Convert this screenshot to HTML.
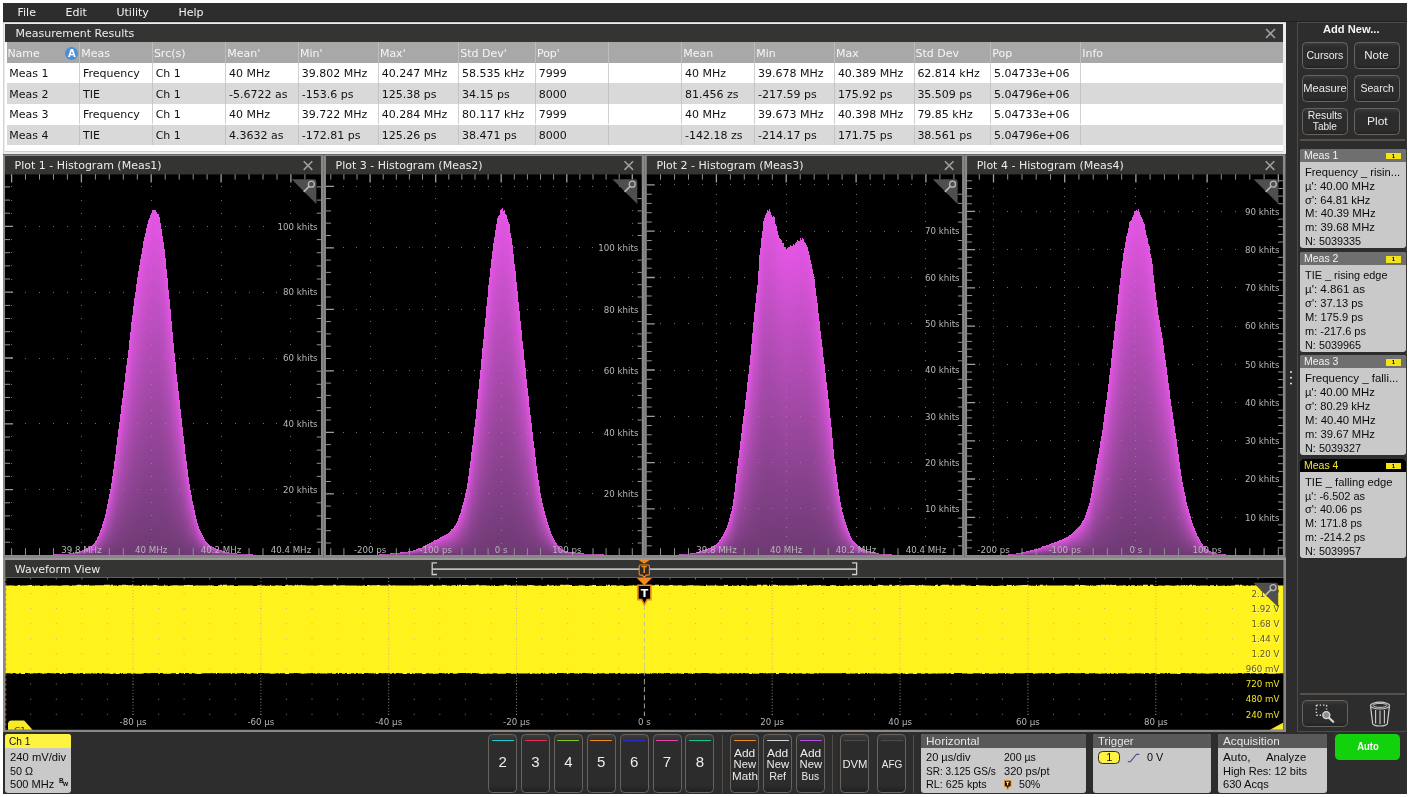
<!DOCTYPE html>
<html lang="en"><head><meta charset="utf-8"><title>Oscilloscope - Measurement Results</title>
<style>
html,body{margin:0;padding:0;background:#fff;}
body{width:1410px;height:797px;overflow:hidden;position:relative;font-family:"DejaVu Sans","Liberation Sans",sans-serif;font-size:11px;color:#111;}
#app{position:absolute;left:0;top:0;width:1410px;height:797px;background:#fff;overflow:hidden;will-change:transform;}
#app::before{content:"";position:absolute;left:3px;top:3px;width:1403.5px;height:790.5px;background:#2d2d2d;}
#app *{box-sizing:border-box;}
.abs{position:absolute;}
.menubar{position:absolute;left:3px;top:3px;width:1403.5px;height:18.8px;background:#2d2d2d;border-bottom:1px solid #1f1f1f;color:#f2f2f2;font-size:11px;line-height:19px;}
.menubar span{position:absolute;top:0;}
.panel{position:absolute;}
.respanel{left:3px;top:21.8px;width:1283px;height:132.5px;background:#ecedef;box-shadow:inset 0.7px 0.7px 0 #c6c6ca;}
.respanel .inner{position:absolute;left:2.2px;top:2.4px;width:1277.7px;height:128.2px;background:#fff;border-bottom:1px solid #cfcfcf;}
.ptitle{position:absolute;background:#343432;color:#ececec;font-size:11px;line-height:17.5px;white-space:nowrap;}
.ptitle .pt{position:absolute;left:10.4px;top:0.8px;}
.xbtn{position:absolute;}
.results{position:absolute;left:0;top:-21.8px;width:1283px;height:0;}
.tr{position:absolute;left:3.5px;width:1276.5px;background:#fff;}
.tr.alt{background:#d9d9d9;}
.tr.th{background:#a8a8a8;color:#f6f6f6;}
.td{position:absolute;top:0;height:100%;padding-top:1.6px;margin-left:-3.5px;padding-left:2.7px;border-left:1px solid #d0d0d0;white-space:nowrap;overflow:hidden;display:flex;align-items:center;font-size:11px;}
.tr .td:first-child{border-left:none;}
.tr.alt .td{border-left-color:#c4c4c4;}
.tr.th .td{border-left-color:#bdbdbd;padding-left:0.9px;}
.abadge{position:absolute;right:1px;top:4.8px;width:13px;height:13px;border-radius:50%;background:#4a8fd6;color:#fff;font-weight:bold;font-size:10px;line-height:13px;text-align:center;}
.fx{display:inline-block;white-space:nowrap;}
svg{display:block;}
svg text{font-family:"DejaVu Sans","Liberation Sans",sans-serif;}
.layer{position:absolute;left:0;top:0;}
/* sidebar */
.sidebar{position:absolute;left:1296.5px;top:22px;width:110px;height:709.5px;border:1px solid #504b47;border-right-color:#3a3836;background:#2d2d2d;font-family:"Liberation Sans","DejaVu Sans",sans-serif;}
.sidebar h2{position:absolute;left:0;top:0.2px;width:108px;margin:0;text-align:center;font-size:11.5px;line-height:13px;color:#f4f4f4;font-weight:bold;}
.sbtn{position:absolute;width:46px;height:26.5px;border:1px solid #6a625c;border-radius:4.5px;background:linear-gradient(#3a3a3a 0,#2c2c2c 18%,#2c2c2c 85%,#222 100%);color:#ececec;font-size:10.8px;line-height:11px;display:flex;align-items:center;justify-content:center;text-align:center;white-space:nowrap;}
.sep{position:absolute;height:1.5px;background:#57514c;}
.badge{position:absolute;left:2px;width:106px;height:99.5px;border-radius:3px;background:#c9c9c9;overflow:hidden;color:#0c0c0c;font-size:10.6px;}
.badge header{position:absolute;left:0;top:0;width:100%;height:13px;background:#6f6f6f;color:#f4f4f4;font-size:10.9px;line-height:13px;padding-left:4.5px;}
.badge.sel header{background:#000;color:#f3ea2a;}
.badge header i{position:absolute;right:4.5px;top:4px;width:15px;height:6.5px;background:#f1e41f;color:#000;font-style:normal;font-size:6px;line-height:6.5px;text-align:center;font-weight:bold;}
.badge p{position:absolute;left:5px;margin:0;line-height:13px;white-space:nowrap;}
/* bottom bar */
.bottom{position:absolute;left:3px;top:732px;width:1403.5px;height:61.5px;background:#2d2d2d;font-family:"Liberation Sans","DejaVu Sans",sans-serif;}
.chb{position:absolute;top:2px;width:29px;height:58.5px;border:1px solid #6a625c;border-radius:4.5px;background:linear-gradient(#3b3b3b 0,#2c2c2c 14%,#2c2c2c 88%,#202020 100%);color:#ececec;text-align:center;}
.chb::before{content:"";position:absolute;left:2.5px;right:2.5px;top:5.2px;height:1.2px;background:var(--c);border-radius:1px;}
.chb b{position:absolute;left:0;width:100%;top:17px;font-weight:normal;font-size:15px;line-height:20px;}
.chb em{position:absolute;left:-3px;right:-3px;top:12.5px;font-style:normal;font-size:10.8px;line-height:11.6px;}
.chb em.one{top:23.5px;}
.vsep{position:absolute;top:2.5px;width:1px;height:58px;background:#544e4a;}
.info{position:absolute;top:2px;height:58.5px;border-radius:3px;background:#c9c9c9;overflow:hidden;color:#0c0c0c;font-size:10.6px;}
.info header{position:absolute;left:0;top:0;width:100%;height:14px;background:#595959;color:#e6e6e6;font-size:10.9px;line-height:14px;padding-left:5px;}
.info.ch header{background:#fff341;color:#111;padding-left:3.8px;}
.info p{position:absolute;margin:0;line-height:13px;white-space:nowrap;}
.autobtn{position:absolute;left:1332.3px;top:2.4px;width:65px;height:25.6px;border-radius:4.5px;background:#12d20b;color:#fff;font-weight:bold;font-size:10.5px;line-height:24px;text-align:center;}
</style></head><body>
<div id="app">
<nav class="menubar"><span style="left:14.5px">File</span><span style="left:62.5px">Edit</span><span style="left:113.5px">Utility</span><span style="left:175.5px">Help</span></nav>
<section class="panel respanel">
<div class="inner"></div><header class="ptitle" style="left:2.2px;top:2.4px;width:1277.7px;height:17.5px"><span class="pt">Measurement Results</span><svg class="xbtn" style="left:1259.4px;top:3.8px" width="11" height="11" viewBox="0 0 11 11"><path d="M1 1L10 10M10 1L1 10" stroke="#9e9e9e" stroke-width="1.6" fill="none"/></svg></header>
<div class="results" role="table">
<div class="tr th" style="top:42px;height:20.5px">
<div class="td" style="left:3.5px;width:72.8px">Name<span class="abadge">A</span></div>
<div class="td" style="left:76.3px;width:72.7px">Meas</div>
<div class="td" style="left:149.0px;width:73.3px">Src(s)</div>
<div class="td" style="left:222.3px;width:72.7px">Mean'</div>
<div class="td" style="left:295.0px;width:80.0px">Min'</div>
<div class="td" style="left:375.0px;width:80.3px">Max'</div>
<div class="td" style="left:455.3px;width:76.7px">Std Dev'</div>
<div class="td" style="left:532.0px;width:73.3px">Pop'</div>
<div class="td" style="left:605.3px;width:73.0px"></div>
<div class="td" style="left:678.3px;width:73.0px">Mean</div>
<div class="td" style="left:751.3px;width:79.9px">Min</div>
<div class="td" style="left:831.2px;width:79.5px">Max</div>
<div class="td" style="left:910.7px;width:76.6px">Std Dev</div>
<div class="td" style="left:987.3px;width:90.0px">Pop</div>
<div class="td" style="left:1077.3px;width:202.7px">Info</div>
</div>
<div class="tr" style="top:62.5px;height:20.8px">
<div class="td" style="left:3.5px;width:72.8px">Meas 1</div>
<div class="td" style="left:76.3px;width:72.7px">Frequency</div>
<div class="td" style="left:149.0px;width:73.3px">Ch 1</div>
<div class="td" style="left:222.3px;width:72.7px">40 MHz</div>
<div class="td" style="left:295.0px;width:80.0px">39.802 MHz</div>
<div class="td" style="left:375.0px;width:80.3px">40.247 MHz</div>
<div class="td" style="left:455.3px;width:76.7px">58.535 kHz</div>
<div class="td" style="left:532.0px;width:73.3px">7999</div>
<div class="td" style="left:605.3px;width:73.0px"></div>
<div class="td" style="left:678.3px;width:73.0px">40 MHz</div>
<div class="td" style="left:751.3px;width:79.9px">39.678 MHz</div>
<div class="td" style="left:831.2px;width:79.5px">40.389 MHz</div>
<div class="td" style="left:910.7px;width:76.6px">62.814 kHz</div>
<div class="td" style="left:987.3px;width:90.0px">5.04733e+06</div>
<div class="td" style="left:1077.3px;width:202.7px"></div>
</div>
<div class="tr alt" style="top:83.3px;height:20.6px">
<div class="td" style="left:3.5px;width:72.8px">Meas 2</div>
<div class="td" style="left:76.3px;width:72.7px">TIE</div>
<div class="td" style="left:149.0px;width:73.3px">Ch 1</div>
<div class="td" style="left:222.3px;width:72.7px">-5.6722 as</div>
<div class="td" style="left:295.0px;width:80.0px">-153.6 ps</div>
<div class="td" style="left:375.0px;width:80.3px">125.38 ps</div>
<div class="td" style="left:455.3px;width:76.7px">34.15 ps</div>
<div class="td" style="left:532.0px;width:73.3px">8000</div>
<div class="td" style="left:605.3px;width:73.0px"></div>
<div class="td" style="left:678.3px;width:73.0px">81.456 zs</div>
<div class="td" style="left:751.3px;width:79.9px">-217.59 ps</div>
<div class="td" style="left:831.2px;width:79.5px">175.92 ps</div>
<div class="td" style="left:910.7px;width:76.6px">35.509 ps</div>
<div class="td" style="left:987.3px;width:90.0px">5.04796e+06</div>
<div class="td" style="left:1077.3px;width:202.7px"></div>
</div>
<div class="tr" style="top:103.9px;height:20.6px">
<div class="td" style="left:3.5px;width:72.8px">Meas 3</div>
<div class="td" style="left:76.3px;width:72.7px">Frequency</div>
<div class="td" style="left:149.0px;width:73.3px">Ch 1</div>
<div class="td" style="left:222.3px;width:72.7px">40 MHz</div>
<div class="td" style="left:295.0px;width:80.0px">39.722 MHz</div>
<div class="td" style="left:375.0px;width:80.3px">40.284 MHz</div>
<div class="td" style="left:455.3px;width:76.7px">80.117 kHz</div>
<div class="td" style="left:532.0px;width:73.3px">7999</div>
<div class="td" style="left:605.3px;width:73.0px"></div>
<div class="td" style="left:678.3px;width:73.0px">40 MHz</div>
<div class="td" style="left:751.3px;width:79.9px">39.673 MHz</div>
<div class="td" style="left:831.2px;width:79.5px">40.398 MHz</div>
<div class="td" style="left:910.7px;width:76.6px">79.85 kHz</div>
<div class="td" style="left:987.3px;width:90.0px">5.04733e+06</div>
<div class="td" style="left:1077.3px;width:202.7px"></div>
</div>
<div class="tr alt" style="top:124.5px;height:20.5px">
<div class="td" style="left:3.5px;width:72.8px">Meas 4</div>
<div class="td" style="left:76.3px;width:72.7px">TIE</div>
<div class="td" style="left:149.0px;width:73.3px">Ch 1</div>
<div class="td" style="left:222.3px;width:72.7px">4.3632 as</div>
<div class="td" style="left:295.0px;width:80.0px">-172.81 ps</div>
<div class="td" style="left:375.0px;width:80.3px">125.26 ps</div>
<div class="td" style="left:455.3px;width:76.7px">38.471 ps</div>
<div class="td" style="left:532.0px;width:73.3px">8000</div>
<div class="td" style="left:605.3px;width:73.0px"></div>
<div class="td" style="left:678.3px;width:73.0px">-142.18 zs</div>
<div class="td" style="left:751.3px;width:79.9px">-214.17 ps</div>
<div class="td" style="left:831.2px;width:79.5px">171.75 ps</div>
<div class="td" style="left:910.7px;width:76.6px">38.561 ps</div>
<div class="td" style="left:987.3px;width:90.0px">5.04796e+06</div>
<div class="td" style="left:1077.3px;width:202.7px"></div>
</div>
</div>
</section>
<svg class="layer plots" width="1410" height="797" viewBox="0 0 1410 797">
<defs><g id="zoomico"><path d="M0 0H22.4Q24.8 0 24.8 2.4V24.6Z" fill="#4f4f4f"/><circle cx="19.7" cy="4.9" r="3.0" fill="none" stroke="#b9b9b9" stroke-width="1.3"/><path d="M17.4 7.2L12.6 12" stroke="#b9b9b9" stroke-width="1.7" stroke-linecap="round"/></g><linearGradient id="hg" x1="0" y1="0" x2="0" y2="1"><stop offset="0" stop-color="#ec58ec" stop-opacity=".97"/><stop offset="1" stop-color="#c468ce" stop-opacity=".56"/></linearGradient><path id="xico" d="M0.4 0.4L9 9M9 0.4L0.4 9" stroke="#9e9e9e" stroke-width="1.6" fill="none"/></defs>
<g id="plot1">
<rect x="3" y="154.3" width="320.45" height="403.2" fill="#8b8987"/>
<rect x="5.0" y="156.0" width="315.95" height="18.19999999999999" fill="#343432"/>
<rect x="5.0" y="174.2" width="315.95" height="380.8" fill="#000"/>
<text x="14.6" y="169" font-size="11" fill="#ececec">Plot 1 - Histogram (Meas1)</text>
<use href="#xico" x="303.3" y="160.9"/>
<path d="M11 489.5h1M25 489.5h1M39 489.5h1M53 489.5h1M67 489.5h1M81 489.5h1M95 489.5h1M109 489.5h1M123 489.5h1M137 489.5h1M151 489.5h1M165 489.5h1M179 489.5h1M193 489.5h1M207 489.5h1M221 489.5h1M235 489.5h1M249 489.5h1M263 489.5h1M276 489.5h1M11 423.5h1M25 423.5h1M39 423.5h1M53 423.5h1M67 423.5h1M81 423.5h1M95 423.5h1M109 423.5h1M123 423.5h1M137 423.5h1M151 423.5h1M165 423.5h1M179 423.5h1M193 423.5h1M207 423.5h1M221 423.5h1M235 423.5h1M249 423.5h1M263 423.5h1M276 423.5h1M11 358.5h1M25 358.5h1M39 358.5h1M53 358.5h1M67 358.5h1M81 358.5h1M95 358.5h1M109 358.5h1M123 358.5h1M137 358.5h1M151 358.5h1M165 358.5h1M179 358.5h1M193 358.5h1M207 358.5h1M221 358.5h1M235 358.5h1M249 358.5h1M263 358.5h1M276 358.5h1M11 292.5h1M25 292.5h1M39 292.5h1M53 292.5h1M67 292.5h1M81 292.5h1M95 292.5h1M109 292.5h1M123 292.5h1M137 292.5h1M151 292.5h1M165 292.5h1M179 292.5h1M193 292.5h1M207 292.5h1M221 292.5h1M235 292.5h1M249 292.5h1M263 292.5h1M276 292.5h1M11 226.5h1M25 226.5h1M39 226.5h1M53 226.5h1M67 226.5h1M81 226.5h1M95 226.5h1M109 226.5h1M123 226.5h1M137 226.5h1M151 226.5h1M165 226.5h1M179 226.5h1M193 226.5h1M207 226.5h1M221 226.5h1M235 226.5h1M249 226.5h1M263 226.5h1M11 542.5h1M11 529.5h1M11 515.5h1M11 502.5h1M11 476.5h1M11 463.5h1M11 450.5h1M11 436.5h1M11 410.5h1M11 397.5h1M11 384.5h1M11 371.5h1M11 344.5h1M11 331.5h1M11 318.5h1M11 305.5h1M11 279.5h1M11 265.5h1M11 252.5h1M11 239.5h1M11 213.5h1M11 200.5h1M11 186.5h1M81 542.5h1M81 529.5h1M81 515.5h1M81 502.5h1M81 476.5h1M81 463.5h1M81 450.5h1M81 436.5h1M81 410.5h1M81 397.5h1M81 384.5h1M81 371.5h1M81 344.5h1M81 331.5h1M81 318.5h1M81 305.5h1M81 279.5h1M81 265.5h1M81 252.5h1M81 239.5h1M81 213.5h1M81 200.5h1M81 186.5h1M151 542.5h1M151 529.5h1M151 515.5h1M151 502.5h1M151 476.5h1M151 463.5h1M151 450.5h1M151 436.5h1M151 410.5h1M151 397.5h1M151 384.5h1M151 371.5h1M151 344.5h1M151 331.5h1M151 318.5h1M151 305.5h1M151 279.5h1M151 265.5h1M151 252.5h1M151 239.5h1M151 213.5h1M151 200.5h1M151 186.5h1M221 542.5h1M221 529.5h1M221 515.5h1M221 502.5h1M221 476.5h1M221 463.5h1M221 450.5h1M221 436.5h1M221 410.5h1M221 397.5h1M221 384.5h1M221 371.5h1M221 344.5h1M221 331.5h1M221 318.5h1M221 305.5h1M221 279.5h1M221 265.5h1M221 252.5h1M221 239.5h1M221 213.5h1M221 200.5h1M221 186.5h1M290 542.5h1M290 529.5h1M290 515.5h1M290 502.5h1M290 476.5h1M290 463.5h1M290 450.5h1M290 436.5h1M290 410.5h1M290 397.5h1M290 384.5h1M290 371.5h1M290 344.5h1M290 331.5h1M290 318.5h1M290 305.5h1M290 279.5h1M290 265.5h1M290 252.5h1M290 239.5h1M290 213.5h1M290 200.5h1M290 186.5h1" stroke="#707070" stroke-width="1" fill="none"/>
<g fill="url(#hg)" shape-rendering="crispEdges"><rect x="50" y="554.6" width="1" height="0.4"/><rect x="51" y="554.6" width="1" height="0.4"/><rect x="52" y="554.5" width="1" height="0.5"/><rect x="53" y="554.4" width="1" height="0.6"/><rect x="54" y="554.4" width="1" height="0.6"/><rect x="55" y="554.3" width="1" height="0.7"/><rect x="56" y="554.3" width="1" height="0.7"/><rect x="57" y="554.2" width="1" height="0.8"/><rect x="58" y="554.2" width="1" height="0.8"/><rect x="59" y="554.1" width="1" height="0.9"/><rect x="60" y="554" width="1" height="1"/><rect x="61" y="554" width="1" height="1"/><rect x="62" y="553.9" width="1" height="1.1"/><rect x="63" y="553.9" width="1" height="1.1"/><rect x="64" y="553.8" width="1" height="1.2"/><rect x="65" y="553.7" width="1" height="1.3"/><rect x="66" y="553.6" width="1" height="1.4"/><rect x="67" y="553.6" width="1" height="1.4"/><rect x="68" y="553.5" width="1" height="1.5"/><rect x="69" y="553.4" width="1" height="1.6"/><rect x="70" y="553.2" width="1" height="1.8"/><rect x="71" y="553.1" width="1" height="1.9"/><rect x="72" y="553" width="1" height="2"/><rect x="73" y="552.8" width="1" height="2.2"/><rect x="74" y="552.6" width="1" height="2.4"/><rect x="75" y="552.4" width="1" height="2.6"/><rect x="76" y="552.2" width="1" height="2.8"/><rect x="77" y="551.9" width="1" height="3.1"/><rect x="78" y="551.6" width="1" height="3.4"/><rect x="79" y="551.3" width="1" height="3.7"/><rect x="80" y="551" width="1" height="4"/><rect x="81" y="550.6" width="1" height="4.4"/><rect x="82" y="550.3" width="1" height="4.7"/><rect x="83" y="549.9" width="1" height="5.1"/><rect x="84" y="549.4" width="1" height="5.6"/><rect x="85" y="549.2" width="1" height="5.8"/><rect x="86" y="548.3" width="1" height="6.7"/><rect x="87" y="547.8" width="1" height="7.2"/><rect x="88" y="547.6" width="1" height="7.4"/><rect x="89" y="546.9" width="1" height="8.1"/><rect x="90" y="546.3" width="1" height="8.7"/><rect x="91" y="545.5" width="1" height="9.5"/><rect x="92" y="544.8" width="1" height="10.2"/><rect x="93" y="544.3" width="1" height="10.7"/><rect x="94" y="543.1" width="1" height="11.9"/><rect x="95" y="541.1" width="1" height="13.9"/><rect x="96" y="539.5" width="1" height="15.5"/><rect x="97" y="537.3" width="1" height="17.7"/><rect x="98" y="535.6" width="1" height="19.4"/><rect x="99" y="533" width="1" height="22"/><rect x="100" y="530.3" width="1" height="24.7"/><rect x="101" y="528" width="1" height="27"/><rect x="102" y="524.4" width="1" height="30.6"/><rect x="103" y="521" width="1" height="34"/><rect x="104" y="517.8" width="1" height="37.2"/><rect x="105" y="513.6" width="1" height="41.4"/><rect x="106" y="508.7" width="1" height="46.3"/><rect x="107" y="503.6" width="1" height="51.4"/><rect x="108" y="499.1" width="1" height="55.9"/><rect x="109" y="494.1" width="1" height="60.9"/><rect x="110" y="488.5" width="1" height="66.5"/><rect x="111" y="483.1" width="1" height="71.9"/><rect x="112" y="476.2" width="1" height="78.8"/><rect x="113" y="468.8" width="1" height="86.2"/><rect x="114" y="461.1" width="1" height="93.9"/><rect x="115" y="453.5" width="1" height="101.5"/><rect x="116" y="445.4" width="1" height="109.6"/><rect x="117" y="437.4" width="1" height="117.6"/><rect x="118" y="429" width="1" height="126"/><rect x="119" y="421.5" width="1" height="133.5"/><rect x="120" y="414.2" width="1" height="140.8"/><rect x="121" y="405" width="1" height="150"/><rect x="122" y="397.6" width="1" height="157.4"/><rect x="123" y="389.5" width="1" height="165.5"/><rect x="124" y="382.4" width="1" height="172.6"/><rect x="125" y="372.8" width="1" height="182.2"/><rect x="126" y="364.9" width="1" height="190.1"/><rect x="127" y="358.3" width="1" height="196.7"/><rect x="128" y="349.6" width="1" height="205.4"/><rect x="129" y="340.2" width="1" height="214.8"/><rect x="130" y="331.5" width="1" height="223.5"/><rect x="131" y="322.3" width="1" height="232.7"/><rect x="132" y="315.1" width="1" height="239.9"/><rect x="133" y="305.8" width="1" height="249.2"/><rect x="134" y="298.3" width="1" height="256.7"/><rect x="135" y="291.8" width="1" height="263.2"/><rect x="136" y="284.3" width="1" height="270.7"/><rect x="137" y="277" width="1" height="278"/><rect x="138" y="270.5" width="1" height="284.5"/><rect x="139" y="264.9" width="1" height="290.1"/><rect x="140" y="258.6" width="1" height="296.4"/><rect x="141" y="254.3" width="1" height="300.7"/><rect x="142" y="248.1" width="1" height="306.9"/><rect x="143" y="241.1" width="1" height="313.9"/><rect x="144" y="237.3" width="1" height="317.7"/><rect x="145" y="233.3" width="1" height="321.7"/><rect x="146" y="227.8" width="1" height="327.2"/><rect x="147" y="223.5" width="1" height="331.5"/><rect x="148" y="219.9" width="1" height="335.1"/><rect x="149" y="217.6" width="1" height="337.4"/><rect x="150" y="214.9" width="1" height="340.1"/><rect x="151" y="212.8" width="1" height="342.2"/><rect x="152" y="210.2" width="1" height="344.8"/><rect x="153" y="209.8" width="1" height="345.2"/><rect x="154" y="209.7" width="1" height="345.3"/><rect x="155" y="209.7" width="1" height="345.3"/><rect x="156" y="212.4" width="1" height="342.6"/><rect x="157" y="214.1" width="1" height="340.9"/><rect x="158" y="214.1" width="1" height="340.9"/><rect x="159" y="216.8" width="1" height="338.2"/><rect x="160" y="223.1" width="1" height="331.9"/><rect x="161" y="229.1" width="1" height="325.9"/><rect x="162" y="236.1" width="1" height="318.9"/><rect x="163" y="242.2" width="1" height="312.8"/><rect x="164" y="248.9" width="1" height="306.1"/><rect x="165" y="258.3" width="1" height="296.7"/><rect x="166" y="268.6" width="1" height="286.4"/><rect x="167" y="278" width="1" height="277"/><rect x="168" y="289.7" width="1" height="265.3"/><rect x="169" y="299.2" width="1" height="255.8"/><rect x="170" y="308.8" width="1" height="246.2"/><rect x="171" y="320.6" width="1" height="234.4"/><rect x="172" y="331.8" width="1" height="223.2"/><rect x="173" y="343" width="1" height="212"/><rect x="174" y="352.9" width="1" height="202.1"/><rect x="175" y="362" width="1" height="193"/><rect x="176" y="373.6" width="1" height="181.4"/><rect x="177" y="381.7" width="1" height="173.3"/><rect x="178" y="391" width="1" height="164"/><rect x="179" y="400" width="1" height="155"/><rect x="180" y="409.2" width="1" height="145.8"/><rect x="181" y="417.9" width="1" height="137.1"/><rect x="182" y="426.9" width="1" height="128.1"/><rect x="183" y="435.5" width="1" height="119.5"/><rect x="184" y="444.4" width="1" height="110.6"/><rect x="185" y="453.6" width="1" height="101.4"/><rect x="186" y="460.9" width="1" height="94.1"/><rect x="187" y="469.3" width="1" height="85.7"/><rect x="188" y="477.2" width="1" height="77.8"/><rect x="189" y="483.6" width="1" height="71.4"/><rect x="190" y="489.6" width="1" height="65.4"/><rect x="191" y="495.2" width="1" height="59.8"/><rect x="192" y="500.5" width="1" height="54.5"/><rect x="193" y="505.4" width="1" height="49.6"/><rect x="194" y="510.2" width="1" height="44.8"/><rect x="195" y="514.7" width="1" height="40.3"/><rect x="196" y="519" width="1" height="36"/><rect x="197" y="523" width="1" height="32"/><rect x="198" y="526.2" width="1" height="28.8"/><rect x="199" y="529" width="1" height="26"/><rect x="200" y="531.1" width="1" height="23.9"/><rect x="201" y="533" width="1" height="22"/><rect x="202" y="535.1" width="1" height="19.9"/><rect x="203" y="537" width="1" height="18"/><rect x="204" y="538.8" width="1" height="16.2"/><rect x="205" y="540.7" width="1" height="14.3"/><rect x="206" y="541.7" width="1" height="13.3"/><rect x="207" y="543" width="1" height="12"/><rect x="208" y="544.4" width="1" height="10.6"/><rect x="209" y="545.2" width="1" height="9.8"/><rect x="210" y="545.8" width="1" height="9.2"/><rect x="211" y="545.9" width="1" height="9.1"/><rect x="212" y="546.7" width="1" height="8.3"/><rect x="213" y="547.3" width="1" height="7.7"/><rect x="214" y="547.5" width="1" height="7.5"/><rect x="215" y="548.2" width="1" height="6.8"/><rect x="216" y="548.8" width="1" height="6.2"/><rect x="217" y="549.1" width="1" height="5.9"/><rect x="218" y="549.3" width="1" height="5.7"/><rect x="219" y="549.7" width="1" height="5.3"/><rect x="220" y="550.1" width="1" height="4.9"/><rect x="221" y="550.4" width="1" height="4.6"/><rect x="222" y="550.8" width="1" height="4.2"/><rect x="223" y="551.1" width="1" height="3.9"/><rect x="224" y="551.4" width="1" height="3.6"/><rect x="225" y="551.6" width="1" height="3.4"/><rect x="226" y="551.9" width="1" height="3.1"/><rect x="227" y="552.1" width="1" height="2.9"/><rect x="228" y="552.3" width="1" height="2.7"/><rect x="229" y="552.5" width="1" height="2.5"/><rect x="230" y="552.7" width="1" height="2.3"/><rect x="231" y="552.8" width="1" height="2.2"/><rect x="232" y="553" width="1" height="2"/><rect x="233" y="553.1" width="1" height="1.9"/><rect x="234" y="553.2" width="1" height="1.8"/><rect x="235" y="553.4" width="1" height="1.6"/><rect x="236" y="553.4" width="1" height="1.6"/><rect x="237" y="553.5" width="1" height="1.5"/><rect x="238" y="553.6" width="1" height="1.4"/><rect x="239" y="553.7" width="1" height="1.3"/><rect x="240" y="553.8" width="1" height="1.2"/><rect x="241" y="553.8" width="1" height="1.2"/><rect x="242" y="553.9" width="1" height="1.1"/><rect x="243" y="554" width="1" height="1"/><rect x="244" y="554" width="1" height="1"/><rect x="245" y="554.1" width="1" height="0.9"/><rect x="246" y="554.1" width="1" height="0.9"/><rect x="247" y="554.2" width="1" height="0.8"/><rect x="248" y="554.2" width="1" height="0.8"/><rect x="249" y="554.3" width="1" height="0.7"/><rect x="250" y="554.3" width="1" height="0.7"/><rect x="251" y="554.4" width="1" height="0.6"/><rect x="252" y="554.4" width="1" height="0.6"/><rect x="253" y="554.5" width="1" height="0.5"/><rect x="254" y="554.5" width="1" height="0.5"/><rect x="255" y="554.6" width="1" height="0.4"/><rect x="256" y="554.6" width="1" height="0.4"/><rect x="257" y="554.6" width="1" height="0.4"/></g>
<path d="M11.6 555.0v-6.8M25.5 174.2v5.4M25.5 555.0v-6.8M39.5 174.2v5.4M39.5 555.0v-6.8M53.5 174.2v5.4M53.5 555.0v-6.8M67.4 174.2v5.4M95.4 174.2v5.4M109.3 174.2v5.4M109.3 555.0v-6.8M123.3 174.2v5.4M123.3 555.0v-6.8M137.3 174.2v5.4M165.2 174.2v5.4M179.2 174.2v5.4M179.2 555.0v-6.8M193.2 174.2v5.4M193.2 555.0v-6.8M207.1 174.2v5.4M235.1 174.2v5.4M249.0 174.2v5.4M249.0 555.0v-6.8M263.0 174.2v5.4M263.0 555.0v-6.8M277.0 174.2v5.4M304.9 174.2v5.4M318.9 555.0v-6.8M5.0 542.2h5.0M320.95 542.2h-4.2M5.0 529.1h5.0M320.95 529.1h-4.2M5.0 515.9h5.0M320.95 515.9h-4.2M5.0 502.8h5.0M320.95 502.8h-4.2M5.0 476.4h5.0M320.95 476.4h-4.2M5.0 463.3h5.0M320.95 463.3h-4.2M5.0 450.1h5.0M320.95 450.1h-4.2M5.0 437.0h5.0M320.95 437.0h-4.2M5.0 410.6h5.0M320.95 410.6h-4.2M5.0 397.5h5.0M320.95 397.5h-4.2M5.0 384.3h5.0M320.95 384.3h-4.2M5.0 371.2h5.0M320.95 371.2h-4.2M5.0 344.8h5.0M320.95 344.8h-4.2M5.0 331.7h5.0M320.95 331.7h-4.2M5.0 318.5h5.0M320.95 318.5h-4.2M5.0 305.4h5.0M320.95 305.4h-4.2M5.0 279.0h5.0M320.95 279.0h-4.2M5.0 265.9h5.0M320.95 265.9h-4.2M5.0 252.7h5.0M320.95 252.7h-4.2M5.0 239.6h5.0M320.95 239.6h-4.2M5.0 213.2h5.0M320.95 213.2h-4.2M5.0 200.1h5.0M320.95 200.1h-4.2M5.0 186.9h5.0M320.95 186.9h-4.2" stroke="#929292" stroke-width="1" fill="none"/>
<path d="M11.6 174.2v8.3M81.4 174.2v8.3M151.2 174.2v8.3M221.1 174.2v8.3M290.9 174.2v8.3M5.0 489.6h8.0M5.0 423.8h8.0M5.0 358.0h8.0M5.0 292.2h8.0M5.0 226.4h8.0" stroke="#9e9e9e" stroke-width="1.3" fill="none"/>
<g font-size="8.67" fill="#b6b6b6">
<text x="317.6" y="492.8" text-anchor="end">20 khits</text>
<text x="317.6" y="427.0" text-anchor="end">40 khits</text>
<text x="317.6" y="361.2" text-anchor="end">60 khits</text>
<text x="317.6" y="295.4" text-anchor="end">80 khits</text>
<text x="317.6" y="229.6" text-anchor="end">100 khits</text>
<text x="81.4" y="552.6" text-anchor="middle">39.8 MHz</text>
<text x="151.2" y="552.6" text-anchor="middle">40 MHz</text>
<text x="221.1" y="552.6" text-anchor="middle">40.2 MHz</text>
<text x="290.9" y="552.6" text-anchor="middle">40.4 MHz</text>
</g>
<use href="#zoomico" x="291.6" y="179.3"/>
</g>
<g id="plot2">
<rect x="323.45" y="154.3" width="320.8" height="403.2" fill="#8b8987"/>
<rect x="325.95" y="156.0" width="315.8" height="18.19999999999999" fill="#343432"/>
<rect x="325.95" y="174.2" width="315.8" height="380.8" fill="#000"/>
<text x="335.6" y="169" font-size="11" fill="#ececec">Plot 3 - Histogram (Meas2)</text>
<use href="#xico" x="624.1" y="160.9"/>
<path d="M330 493.5h1M343 493.5h1M356 493.5h1M370 493.5h1M383 493.5h1M396 493.5h1M409 493.5h1M422 493.5h1M435 493.5h1M448 493.5h1M461 493.5h1M474 493.5h1M488 493.5h1M501 493.5h1M514 493.5h1M527 493.5h1M540 493.5h1M553 493.5h1M566 493.5h1M579 493.5h1M592 493.5h1M330 432.5h1M343 432.5h1M356 432.5h1M370 432.5h1M383 432.5h1M396 432.5h1M409 432.5h1M422 432.5h1M435 432.5h1M448 432.5h1M461 432.5h1M474 432.5h1M488 432.5h1M501 432.5h1M514 432.5h1M527 432.5h1M540 432.5h1M553 432.5h1M566 432.5h1M579 432.5h1M592 432.5h1M330 370.5h1M343 370.5h1M356 370.5h1M370 370.5h1M383 370.5h1M396 370.5h1M409 370.5h1M422 370.5h1M435 370.5h1M448 370.5h1M461 370.5h1M474 370.5h1M488 370.5h1M501 370.5h1M514 370.5h1M527 370.5h1M540 370.5h1M553 370.5h1M566 370.5h1M579 370.5h1M592 370.5h1M330 309.5h1M343 309.5h1M356 309.5h1M370 309.5h1M383 309.5h1M396 309.5h1M409 309.5h1M422 309.5h1M435 309.5h1M448 309.5h1M461 309.5h1M474 309.5h1M488 309.5h1M501 309.5h1M514 309.5h1M527 309.5h1M540 309.5h1M553 309.5h1M566 309.5h1M579 309.5h1M592 309.5h1M330 247.5h1M343 247.5h1M356 247.5h1M370 247.5h1M383 247.5h1M396 247.5h1M409 247.5h1M422 247.5h1M435 247.5h1M448 247.5h1M461 247.5h1M474 247.5h1M488 247.5h1M501 247.5h1M514 247.5h1M527 247.5h1M540 247.5h1M553 247.5h1M566 247.5h1M579 247.5h1M592 247.5h1M330 186.5h1M343 186.5h1M356 186.5h1M370 186.5h1M383 186.5h1M396 186.5h1M409 186.5h1M422 186.5h1M435 186.5h1M448 186.5h1M461 186.5h1M474 186.5h1M488 186.5h1M501 186.5h1M514 186.5h1M527 186.5h1M540 186.5h1M553 186.5h1M566 186.5h1M579 186.5h1M592 186.5h1M606 186.5h1M619 186.5h1M632 186.5h1M370 543.5h1M370 530.5h1M370 518.5h1M370 506.5h1M370 481.5h1M370 469.5h1M370 456.5h1M370 444.5h1M370 419.5h1M370 407.5h1M370 395.5h1M370 383.5h1M370 358.5h1M370 346.5h1M370 333.5h1M370 321.5h1M370 296.5h1M370 284.5h1M370 272.5h1M370 260.5h1M370 235.5h1M370 223.5h1M370 210.5h1M370 198.5h1M435 543.5h1M435 530.5h1M435 518.5h1M435 506.5h1M435 481.5h1M435 469.5h1M435 456.5h1M435 444.5h1M435 419.5h1M435 407.5h1M435 395.5h1M435 383.5h1M435 358.5h1M435 346.5h1M435 333.5h1M435 321.5h1M435 296.5h1M435 284.5h1M435 272.5h1M435 260.5h1M435 235.5h1M435 223.5h1M435 210.5h1M435 198.5h1M501 543.5h1M501 530.5h1M501 518.5h1M501 506.5h1M501 481.5h1M501 469.5h1M501 456.5h1M501 444.5h1M501 419.5h1M501 407.5h1M501 395.5h1M501 383.5h1M501 358.5h1M501 346.5h1M501 333.5h1M501 321.5h1M501 296.5h1M501 284.5h1M501 272.5h1M501 260.5h1M501 235.5h1M501 223.5h1M501 210.5h1M501 198.5h1M566 543.5h1M566 530.5h1M566 518.5h1M566 506.5h1M566 481.5h1M566 469.5h1M566 456.5h1M566 444.5h1M566 419.5h1M566 407.5h1M566 395.5h1M566 383.5h1M566 358.5h1M566 346.5h1M566 333.5h1M566 321.5h1M566 296.5h1M566 284.5h1M566 272.5h1M566 260.5h1M566 235.5h1M566 223.5h1M566 210.5h1M566 198.5h1M632 543.5h1M632 530.5h1M632 518.5h1M632 506.5h1M632 481.5h1M632 469.5h1M632 456.5h1M632 444.5h1M632 419.5h1M632 407.5h1M632 395.5h1M632 383.5h1M632 358.5h1M632 346.5h1M632 333.5h1M632 321.5h1M632 296.5h1M632 284.5h1M632 272.5h1M632 260.5h1M632 235.5h1M632 223.5h1M632 210.5h1M632 198.5h1" stroke="#707070" stroke-width="1" fill="none"/>
<g fill="url(#hg)" shape-rendering="crispEdges"><rect x="376" y="554.6" width="1" height="0.4"/><rect x="377" y="554.6" width="1" height="0.4"/><rect x="378" y="554.5" width="1" height="0.5"/><rect x="379" y="554.4" width="1" height="0.6"/><rect x="380" y="554.4" width="1" height="0.6"/><rect x="381" y="554.3" width="1" height="0.7"/><rect x="382" y="554.2" width="1" height="0.8"/><rect x="383" y="554.1" width="1" height="0.9"/><rect x="384" y="554" width="1" height="1"/><rect x="385" y="553.9" width="1" height="1.1"/><rect x="386" y="553.8" width="1" height="1.2"/><rect x="387" y="553.6" width="1" height="1.4"/><rect x="388" y="553.5" width="1" height="1.5"/><rect x="389" y="553.5" width="1" height="1.5"/><rect x="390" y="553.4" width="1" height="1.6"/><rect x="391" y="553.3" width="1" height="1.7"/><rect x="392" y="553.2" width="1" height="1.8"/><rect x="393" y="553.1" width="1" height="1.9"/><rect x="394" y="553" width="1" height="2"/><rect x="395" y="552.9" width="1" height="2.1"/><rect x="396" y="552.8" width="1" height="2.2"/><rect x="397" y="552.8" width="1" height="2.2"/><rect x="398" y="552.7" width="1" height="2.3"/><rect x="399" y="552.6" width="1" height="2.4"/><rect x="400" y="552.4" width="1" height="2.6"/><rect x="401" y="552.3" width="1" height="2.7"/><rect x="402" y="552.2" width="1" height="2.8"/><rect x="403" y="552.1" width="1" height="2.9"/><rect x="404" y="552" width="1" height="3"/><rect x="405" y="551.8" width="1" height="3.2"/><rect x="406" y="551.7" width="1" height="3.3"/><rect x="407" y="551.5" width="1" height="3.5"/><rect x="408" y="551.4" width="1" height="3.6"/><rect x="409" y="551.2" width="1" height="3.8"/><rect x="410" y="551" width="1" height="4"/><rect x="411" y="550.8" width="1" height="4.2"/><rect x="412" y="550.6" width="1" height="4.4"/><rect x="413" y="550.3" width="1" height="4.7"/><rect x="414" y="550.1" width="1" height="4.9"/><rect x="415" y="549.7" width="1" height="5.3"/><rect x="416" y="549.4" width="1" height="5.6"/><rect x="417" y="549" width="1" height="6"/><rect x="418" y="548.4" width="1" height="6.6"/><rect x="419" y="548" width="1" height="7"/><rect x="420" y="548" width="1" height="7"/><rect x="421" y="547.6" width="1" height="7.4"/><rect x="422" y="546.6" width="1" height="8.4"/><rect x="423" y="546.2" width="1" height="8.8"/><rect x="424" y="545.7" width="1" height="9.3"/><rect x="425" y="545.4" width="1" height="9.6"/><rect x="426" y="544.7" width="1" height="10.3"/><rect x="427" y="544.2" width="1" height="10.8"/><rect x="428" y="543.7" width="1" height="11.3"/><rect x="429" y="543.4" width="1" height="11.6"/><rect x="430" y="542.7" width="1" height="12.3"/><rect x="431" y="542.2" width="1" height="12.8"/><rect x="432" y="541.5" width="1" height="13.5"/><rect x="433" y="540.8" width="1" height="14.2"/><rect x="434" y="540.3" width="1" height="14.7"/><rect x="435" y="540" width="1" height="15"/><rect x="436" y="539.5" width="1" height="15.5"/><rect x="437" y="539" width="1" height="16"/><rect x="438" y="538.6" width="1" height="16.4"/><rect x="439" y="538.1" width="1" height="16.9"/><rect x="440" y="537.3" width="1" height="17.7"/><rect x="441" y="536.8" width="1" height="18.2"/><rect x="442" y="536.3" width="1" height="18.7"/><rect x="443" y="535.5" width="1" height="19.5"/><rect x="444" y="535.2" width="1" height="19.8"/><rect x="445" y="534.6" width="1" height="20.4"/><rect x="446" y="534.2" width="1" height="20.8"/><rect x="447" y="533.6" width="1" height="21.4"/><rect x="448" y="532.6" width="1" height="22.4"/><rect x="449" y="531.9" width="1" height="23.1"/><rect x="450" y="530.8" width="1" height="24.2"/><rect x="451" y="529.4" width="1" height="25.6"/><rect x="452" y="528.6" width="1" height="26.4"/><rect x="453" y="527.7" width="1" height="27.3"/><rect x="454" y="525.9" width="1" height="29.1"/><rect x="455" y="524.5" width="1" height="30.5"/><rect x="456" y="522.7" width="1" height="32.3"/><rect x="457" y="520.5" width="1" height="34.5"/><rect x="458" y="518.2" width="1" height="36.8"/><rect x="459" y="515.4" width="1" height="39.6"/><rect x="460" y="512.7" width="1" height="42.3"/><rect x="461" y="508.9" width="1" height="46.1"/><rect x="462" y="505.3" width="1" height="49.7"/><rect x="463" y="502.2" width="1" height="52.8"/><rect x="464" y="497.6" width="1" height="57.4"/><rect x="465" y="493.3" width="1" height="61.7"/><rect x="466" y="488.6" width="1" height="66.4"/><rect x="467" y="482.7" width="1" height="72.3"/><rect x="468" y="476.1" width="1" height="78.9"/><rect x="469" y="468.3" width="1" height="86.7"/><rect x="470" y="461" width="1" height="94"/><rect x="471" y="452.4" width="1" height="102.6"/><rect x="472" y="444.8" width="1" height="110.2"/><rect x="473" y="435.6" width="1" height="119.4"/><rect x="474" y="427.2" width="1" height="127.8"/><rect x="475" y="418.9" width="1" height="136.1"/><rect x="476" y="409.3" width="1" height="145.7"/><rect x="477" y="398.8" width="1" height="156.2"/><rect x="478" y="389.1" width="1" height="165.9"/><rect x="479" y="379.3" width="1" height="175.7"/><rect x="480" y="369.6" width="1" height="185.4"/><rect x="481" y="359.4" width="1" height="195.6"/><rect x="482" y="348.4" width="1" height="206.6"/><rect x="483" y="339.1" width="1" height="215.9"/><rect x="484" y="326.8" width="1" height="228.2"/><rect x="485" y="317.8" width="1" height="237.2"/><rect x="486" y="305.7" width="1" height="249.3"/><rect x="487" y="297" width="1" height="258"/><rect x="488" y="285.4" width="1" height="269.6"/><rect x="489" y="276.7" width="1" height="278.3"/><rect x="490" y="268" width="1" height="287"/><rect x="491" y="259.1" width="1" height="295.9"/><rect x="492" y="250.6" width="1" height="304.4"/><rect x="493" y="243.3" width="1" height="311.7"/><rect x="494" y="236.8" width="1" height="318.2"/><rect x="495" y="230.3" width="1" height="324.7"/><rect x="496" y="223.7" width="1" height="331.3"/><rect x="497" y="218.3" width="1" height="336.7"/><rect x="498" y="216.2" width="1" height="338.8"/><rect x="499" y="215.1" width="1" height="339.9"/><rect x="500" y="210.4" width="1" height="344.6"/><rect x="501" y="209.1" width="1" height="345.9"/><rect x="502" y="208" width="1" height="347"/><rect x="503" y="210.8" width="1" height="344.2"/><rect x="504" y="210.2" width="1" height="344.8"/><rect x="505" y="214.3" width="1" height="340.7"/><rect x="506" y="214.8" width="1" height="340.2"/><rect x="507" y="218.7" width="1" height="336.3"/><rect x="508" y="221.8" width="1" height="333.2"/><rect x="509" y="224.3" width="1" height="330.7"/><rect x="510" y="232.7" width="1" height="322.3"/><rect x="511" y="238.3" width="1" height="316.7"/><rect x="512" y="244.7" width="1" height="310.3"/><rect x="513" y="254.3" width="1" height="300.7"/><rect x="514" y="263.5" width="1" height="291.5"/><rect x="515" y="271.3" width="1" height="283.7"/><rect x="516" y="282.1" width="1" height="272.9"/><rect x="517" y="290.8" width="1" height="264.2"/><rect x="518" y="302.2" width="1" height="252.8"/><rect x="519" y="311" width="1" height="244"/><rect x="520" y="321.3" width="1" height="233.7"/><rect x="521" y="329.8" width="1" height="225.2"/><rect x="522" y="340.9" width="1" height="214.1"/><rect x="523" y="348.6" width="1" height="206.4"/><rect x="524" y="360" width="1" height="195"/><rect x="525" y="368" width="1" height="187"/><rect x="526" y="378.8" width="1" height="176.2"/><rect x="527" y="387.8" width="1" height="167.2"/><rect x="528" y="396.1" width="1" height="158.9"/><rect x="529" y="406.5" width="1" height="148.5"/><rect x="530" y="415.4" width="1" height="139.6"/><rect x="531" y="423.3" width="1" height="131.7"/><rect x="532" y="432.2" width="1" height="122.8"/><rect x="533" y="440.9" width="1" height="114.1"/><rect x="534" y="448" width="1" height="107"/><rect x="535" y="457.3" width="1" height="97.7"/><rect x="536" y="465.5" width="1" height="89.5"/><rect x="537" y="472.8" width="1" height="82.2"/><rect x="538" y="479.7" width="1" height="75.3"/><rect x="539" y="486.3" width="1" height="68.7"/><rect x="540" y="492.8" width="1" height="62.2"/><rect x="541" y="497.7" width="1" height="57.3"/><rect x="542" y="502.8" width="1" height="52.2"/><rect x="543" y="506.9" width="1" height="48.1"/><rect x="544" y="510.8" width="1" height="44.2"/><rect x="545" y="514.7" width="1" height="40.3"/><rect x="546" y="518.2" width="1" height="36.8"/><rect x="547" y="521.7" width="1" height="33.3"/><rect x="548" y="524.7" width="1" height="30.3"/><rect x="549" y="527.8" width="1" height="27.2"/><rect x="550" y="530.8" width="1" height="24.2"/><rect x="551" y="533.6" width="1" height="21.4"/><rect x="552" y="535.7" width="1" height="19.3"/><rect x="553" y="538.1" width="1" height="16.9"/><rect x="554" y="540.1" width="1" height="14.9"/><rect x="555" y="541.5" width="1" height="13.5"/><rect x="556" y="542.9" width="1" height="12.1"/><rect x="557" y="544.9" width="1" height="10.1"/><rect x="558" y="546" width="1" height="9"/><rect x="559" y="547.4" width="1" height="7.6"/><rect x="560" y="548.4" width="1" height="6.6"/><rect x="561" y="549.3" width="1" height="5.7"/><rect x="562" y="549.9" width="1" height="5.1"/><rect x="563" y="550.2" width="1" height="4.8"/><rect x="564" y="550.5" width="1" height="4.5"/><rect x="565" y="550.8" width="1" height="4.2"/><rect x="566" y="551.1" width="1" height="3.9"/><rect x="567" y="551.3" width="1" height="3.7"/><rect x="568" y="551.5" width="1" height="3.5"/><rect x="569" y="551.7" width="1" height="3.3"/><rect x="570" y="551.9" width="1" height="3.1"/><rect x="571" y="552.1" width="1" height="2.9"/><rect x="572" y="552.3" width="1" height="2.7"/><rect x="573" y="552.4" width="1" height="2.6"/><rect x="574" y="552.5" width="1" height="2.5"/><rect x="575" y="552.7" width="1" height="2.3"/><rect x="576" y="552.8" width="1" height="2.2"/><rect x="577" y="552.9" width="1" height="2.1"/><rect x="578" y="553" width="1" height="2"/><rect x="579" y="553.1" width="1" height="1.9"/><rect x="580" y="553.2" width="1" height="1.8"/><rect x="581" y="553.3" width="1" height="1.7"/><rect x="582" y="553.3" width="1" height="1.7"/><rect x="583" y="553.4" width="1" height="1.6"/><rect x="584" y="553.5" width="1" height="1.5"/><rect x="585" y="553.6" width="1" height="1.4"/><rect x="586" y="553.6" width="1" height="1.4"/><rect x="587" y="553.7" width="1" height="1.3"/><rect x="588" y="553.8" width="1" height="1.2"/><rect x="589" y="553.8" width="1" height="1.2"/><rect x="590" y="553.9" width="1" height="1.1"/><rect x="591" y="553.9" width="1" height="1.1"/><rect x="592" y="554" width="1" height="1"/><rect x="593" y="554" width="1" height="1"/><rect x="594" y="554.1" width="1" height="0.9"/><rect x="595" y="554.1" width="1" height="0.9"/><rect x="596" y="554.2" width="1" height="0.8"/><rect x="597" y="554.2" width="1" height="0.8"/><rect x="598" y="554.2" width="1" height="0.8"/><rect x="599" y="554.3" width="1" height="0.7"/><rect x="600" y="554.3" width="1" height="0.7"/><rect x="601" y="554.4" width="1" height="0.6"/><rect x="602" y="554.4" width="1" height="0.6"/><rect x="603" y="554.4" width="1" height="0.6"/><rect x="604" y="554.5" width="1" height="0.5"/><rect x="605" y="554.5" width="1" height="0.5"/><rect x="606" y="554.5" width="1" height="0.5"/><rect x="607" y="554.6" width="1" height="0.4"/><rect x="608" y="554.6" width="1" height="0.4"/><rect x="609" y="554.6" width="1" height="0.4"/></g>
<path d="M330.8 174.2v5.4M330.8 555.0v-6.8M343.9 174.2v5.4M343.9 555.0v-6.8M357.0 174.2v5.4M383.2 174.2v5.4M396.3 174.2v5.4M396.3 555.0v-6.8M409.4 174.2v5.4M409.4 555.0v-6.8M422.5 174.2v5.4M448.8 174.2v5.4M461.9 174.2v5.4M461.9 555.0v-6.8M475.0 174.2v5.4M475.0 555.0v-6.8M488.1 174.2v5.4M488.1 555.0v-6.8M514.3 174.2v5.4M514.3 555.0v-6.8M527.4 174.2v5.4M527.4 555.0v-6.8M540.5 174.2v5.4M540.5 555.0v-6.8M553.6 174.2v5.4M579.9 174.2v5.4M593.0 174.2v5.4M593.0 555.0v-6.8M606.1 174.2v5.4M606.1 555.0v-6.8M619.2 174.2v5.4M619.2 555.0v-6.8M632.3 555.0v-6.8M325.95 543.0h5.0M641.75 543.0h-4.2M325.95 530.7h5.0M641.75 530.7h-4.2M325.95 518.4h5.0M641.75 518.4h-4.2M325.95 506.1h5.0M641.75 506.1h-4.2M325.95 481.5h5.0M641.75 481.5h-4.2M325.95 469.2h5.0M641.75 469.2h-4.2M325.95 456.9h5.0M641.75 456.9h-4.2M325.95 444.6h5.0M641.75 444.6h-4.2M325.95 420.0h5.0M641.75 420.0h-4.2M325.95 407.7h5.0M641.75 407.7h-4.2M325.95 395.4h5.0M641.75 395.4h-4.2M325.95 383.1h5.0M641.75 383.1h-4.2M325.95 358.5h5.0M641.75 358.5h-4.2M325.95 346.2h5.0M641.75 346.2h-4.2M325.95 333.9h5.0M641.75 333.9h-4.2M325.95 321.6h5.0M641.75 321.6h-4.2M325.95 297.0h5.0M641.75 297.0h-4.2M325.95 284.7h5.0M641.75 284.7h-4.2M325.95 272.4h5.0M641.75 272.4h-4.2M325.95 260.1h5.0M641.75 260.1h-4.2M325.95 235.5h5.0M641.75 235.5h-4.2M325.95 223.2h5.0M641.75 223.2h-4.2M325.95 210.9h5.0M641.75 210.9h-4.2M325.95 198.6h5.0M641.75 198.6h-4.2" stroke="#929292" stroke-width="1" fill="none"/>
<path d="M370.1 174.2v8.3M435.7 174.2v8.3M501.2 174.2v8.3M566.8 174.2v8.3M632.3 174.2v8.3M325.95 493.8h8.0M325.95 432.3h8.0M325.95 370.8h8.0M325.95 309.3h8.0M325.95 247.8h8.0M325.95 186.3h8.0" stroke="#9e9e9e" stroke-width="1.3" fill="none"/>
<g font-size="8.67" fill="#b6b6b6">
<text x="638.4" y="497.0" text-anchor="end">20 khits</text>
<text x="638.4" y="435.5" text-anchor="end">40 khits</text>
<text x="638.4" y="374.0" text-anchor="end">60 khits</text>
<text x="638.4" y="312.5" text-anchor="end">80 khits</text>
<text x="638.4" y="251.0" text-anchor="end">100 khits</text>
<text x="370.1" y="552.6" text-anchor="middle">-200 ps</text>
<text x="435.7" y="552.6" text-anchor="middle">-100 ps</text>
<text x="501.2" y="552.6" text-anchor="middle">0 s</text>
<text x="566.8" y="552.6" text-anchor="middle">100 ps</text>
</g>
<use href="#zoomico" x="612.5" y="179.3"/>
</g>
<g id="plot3">
<rect x="644.25" y="154.3" width="320.35" height="403.2" fill="#8b8987"/>
<rect x="646.75" y="156.0" width="315.35" height="18.19999999999999" fill="#343432"/>
<rect x="646.75" y="174.2" width="315.35" height="380.8" fill="#000"/>
<text x="656.4" y="169" font-size="11" fill="#ececec">Plot 2 - Histogram (Meas3)</text>
<use href="#xico" x="944.5" y="160.9"/>
<path d="M660 508.5h1M674 508.5h1M688 508.5h1M702 508.5h1M716 508.5h1M730 508.5h1M744 508.5h1M758 508.5h1M772 508.5h1M786 508.5h1M800 508.5h1M814 508.5h1M828 508.5h1M842 508.5h1M856 508.5h1M870 508.5h1M884 508.5h1M898 508.5h1M911 508.5h1M660 462.5h1M674 462.5h1M688 462.5h1M702 462.5h1M716 462.5h1M730 462.5h1M744 462.5h1M758 462.5h1M772 462.5h1M786 462.5h1M800 462.5h1M814 462.5h1M828 462.5h1M842 462.5h1M856 462.5h1M870 462.5h1M884 462.5h1M898 462.5h1M911 462.5h1M660 416.5h1M674 416.5h1M688 416.5h1M702 416.5h1M716 416.5h1M730 416.5h1M744 416.5h1M758 416.5h1M772 416.5h1M786 416.5h1M800 416.5h1M814 416.5h1M828 416.5h1M842 416.5h1M856 416.5h1M870 416.5h1M884 416.5h1M898 416.5h1M911 416.5h1M660 370.5h1M674 370.5h1M688 370.5h1M702 370.5h1M716 370.5h1M730 370.5h1M744 370.5h1M758 370.5h1M772 370.5h1M786 370.5h1M800 370.5h1M814 370.5h1M828 370.5h1M842 370.5h1M856 370.5h1M870 370.5h1M884 370.5h1M898 370.5h1M911 370.5h1M660 323.5h1M674 323.5h1M688 323.5h1M702 323.5h1M716 323.5h1M730 323.5h1M744 323.5h1M758 323.5h1M772 323.5h1M786 323.5h1M800 323.5h1M814 323.5h1M828 323.5h1M842 323.5h1M856 323.5h1M870 323.5h1M884 323.5h1M898 323.5h1M911 323.5h1M660 277.5h1M674 277.5h1M688 277.5h1M702 277.5h1M716 277.5h1M730 277.5h1M744 277.5h1M758 277.5h1M772 277.5h1M786 277.5h1M800 277.5h1M814 277.5h1M828 277.5h1M842 277.5h1M856 277.5h1M870 277.5h1M884 277.5h1M898 277.5h1M911 277.5h1M660 231.5h1M674 231.5h1M688 231.5h1M702 231.5h1M716 231.5h1M730 231.5h1M744 231.5h1M758 231.5h1M772 231.5h1M786 231.5h1M800 231.5h1M814 231.5h1M828 231.5h1M842 231.5h1M856 231.5h1M870 231.5h1M884 231.5h1M898 231.5h1M911 231.5h1M660 184.5h1M674 184.5h1M688 184.5h1M702 184.5h1M716 184.5h1M730 184.5h1M744 184.5h1M758 184.5h1M772 184.5h1M786 184.5h1M800 184.5h1M814 184.5h1M828 184.5h1M842 184.5h1M856 184.5h1M870 184.5h1M884 184.5h1M898 184.5h1M911 184.5h1M925 184.5h1M939 184.5h1M953 184.5h1M716 545.5h1M716 536.5h1M716 527.5h1M716 518.5h1M716 499.5h1M716 490.5h1M716 481.5h1M716 471.5h1M716 453.5h1M716 444.5h1M716 434.5h1M716 425.5h1M716 407.5h1M716 397.5h1M716 388.5h1M716 379.5h1M716 360.5h1M716 351.5h1M716 342.5h1M716 333.5h1M716 314.5h1M716 305.5h1M716 295.5h1M716 286.5h1M716 268.5h1M716 258.5h1M716 249.5h1M716 240.5h1M716 221.5h1M716 212.5h1M716 203.5h1M716 194.5h1M786 545.5h1M786 536.5h1M786 527.5h1M786 518.5h1M786 499.5h1M786 490.5h1M786 481.5h1M786 471.5h1M786 453.5h1M786 444.5h1M786 434.5h1M786 425.5h1M786 407.5h1M786 397.5h1M786 388.5h1M786 379.5h1M786 360.5h1M786 351.5h1M786 342.5h1M786 333.5h1M786 314.5h1M786 305.5h1M786 295.5h1M786 286.5h1M786 268.5h1M786 258.5h1M786 249.5h1M786 240.5h1M786 221.5h1M786 212.5h1M786 203.5h1M786 194.5h1M856 545.5h1M856 536.5h1M856 527.5h1M856 518.5h1M856 499.5h1M856 490.5h1M856 481.5h1M856 471.5h1M856 453.5h1M856 444.5h1M856 434.5h1M856 425.5h1M856 407.5h1M856 397.5h1M856 388.5h1M856 379.5h1M856 360.5h1M856 351.5h1M856 342.5h1M856 333.5h1M856 314.5h1M856 305.5h1M856 295.5h1M856 286.5h1M856 268.5h1M856 258.5h1M856 249.5h1M856 240.5h1M856 221.5h1M856 212.5h1M856 203.5h1M856 194.5h1M925 545.5h1M925 536.5h1M925 527.5h1M925 518.5h1M925 499.5h1M925 490.5h1M925 481.5h1M925 471.5h1M925 453.5h1M925 444.5h1M925 434.5h1M925 425.5h1M925 407.5h1M925 397.5h1M925 388.5h1M925 379.5h1M925 360.5h1M925 351.5h1M925 342.5h1M925 333.5h1M925 314.5h1M925 305.5h1M925 295.5h1M925 286.5h1M925 268.5h1M925 258.5h1M925 249.5h1M925 240.5h1M925 221.5h1M925 212.5h1M925 203.5h1M925 194.5h1" stroke="#707070" stroke-width="1" fill="none"/>
<g fill="url(#hg)" shape-rendering="crispEdges"><rect x="675" y="554.6" width="1" height="0.4"/><rect x="676" y="554.6" width="1" height="0.4"/><rect x="677" y="554.6" width="1" height="0.4"/><rect x="678" y="554.5" width="1" height="0.5"/><rect x="679" y="554.4" width="1" height="0.6"/><rect x="680" y="554.4" width="1" height="0.6"/><rect x="681" y="554.3" width="1" height="0.7"/><rect x="682" y="554.2" width="1" height="0.8"/><rect x="683" y="554.2" width="1" height="0.8"/><rect x="684" y="554.1" width="1" height="0.9"/><rect x="685" y="554" width="1" height="1"/><rect x="686" y="553.9" width="1" height="1.1"/><rect x="687" y="553.7" width="1" height="1.3"/><rect x="688" y="553.6" width="1" height="1.4"/><rect x="689" y="553.5" width="1" height="1.5"/><rect x="690" y="553.4" width="1" height="1.6"/><rect x="691" y="553.2" width="1" height="1.8"/><rect x="692" y="553.1" width="1" height="1.9"/><rect x="693" y="552.9" width="1" height="2.1"/><rect x="694" y="552.7" width="1" height="2.3"/><rect x="695" y="552.5" width="1" height="2.5"/><rect x="696" y="552.2" width="1" height="2.8"/><rect x="697" y="551.9" width="1" height="3.1"/><rect x="698" y="551.6" width="1" height="3.4"/><rect x="699" y="551.3" width="1" height="3.7"/><rect x="700" y="551" width="1" height="4"/><rect x="701" y="550.7" width="1" height="4.3"/><rect x="702" y="550.3" width="1" height="4.7"/><rect x="703" y="550" width="1" height="5"/><rect x="704" y="549.7" width="1" height="5.3"/><rect x="705" y="549.3" width="1" height="5.7"/><rect x="706" y="549" width="1" height="6"/><rect x="707" y="548.8" width="1" height="6.2"/><rect x="708" y="548.3" width="1" height="6.7"/><rect x="709" y="548" width="1" height="7"/><rect x="710" y="547.5" width="1" height="7.5"/><rect x="711" y="547" width="1" height="8"/><rect x="712" y="546.8" width="1" height="8.2"/><rect x="713" y="546.3" width="1" height="8.7"/><rect x="714" y="545.3" width="1" height="9.7"/><rect x="715" y="544.9" width="1" height="10.1"/><rect x="716" y="544" width="1" height="11"/><rect x="717" y="542.5" width="1" height="12.5"/><rect x="718" y="541.5" width="1" height="13.5"/><rect x="719" y="539.8" width="1" height="15.2"/><rect x="720" y="538.5" width="1" height="16.5"/><rect x="721" y="536.9" width="1" height="18.1"/><rect x="722" y="535.7" width="1" height="19.3"/><rect x="723" y="533.8" width="1" height="21.2"/><rect x="724" y="531.9" width="1" height="23.1"/><rect x="725" y="530.2" width="1" height="24.8"/><rect x="726" y="527.8" width="1" height="27.2"/><rect x="727" y="525" width="1" height="30"/><rect x="728" y="522" width="1" height="33"/><rect x="729" y="517.7" width="1" height="37.3"/><rect x="730" y="514.1" width="1" height="40.9"/><rect x="731" y="510.5" width="1" height="44.5"/><rect x="732" y="505.7" width="1" height="49.3"/><rect x="733" y="498.6" width="1" height="56.4"/><rect x="734" y="491.5" width="1" height="63.5"/><rect x="735" y="483.1" width="1" height="71.9"/><rect x="736" y="474.4" width="1" height="80.6"/><rect x="737" y="466.2" width="1" height="88.8"/><rect x="738" y="457.8" width="1" height="97.2"/><rect x="739" y="450.3" width="1" height="104.7"/><rect x="740" y="441.4" width="1" height="113.6"/><rect x="741" y="433.4" width="1" height="121.6"/><rect x="742" y="424.2" width="1" height="130.8"/><rect x="743" y="415.7" width="1" height="139.3"/><rect x="744" y="408.6" width="1" height="146.4"/><rect x="745" y="400.2" width="1" height="154.8"/><rect x="746" y="391.8" width="1" height="163.2"/><rect x="747" y="381.9" width="1" height="173.1"/><rect x="748" y="374.1" width="1" height="180.9"/><rect x="749" y="364.6" width="1" height="190.4"/><rect x="750" y="355.3" width="1" height="199.7"/><rect x="751" y="343.9" width="1" height="211.1"/><rect x="752" y="332.8" width="1" height="222.2"/><rect x="753" y="322.3" width="1" height="232.7"/><rect x="754" y="311.9" width="1" height="243.1"/><rect x="755" y="302.5" width="1" height="252.5"/><rect x="756" y="292.9" width="1" height="262.1"/><rect x="757" y="285.1" width="1" height="269.9"/><rect x="758" y="271.2" width="1" height="283.8"/><rect x="759" y="255.2" width="1" height="299.8"/><rect x="760" y="247.6" width="1" height="307.4"/><rect x="761" y="238.4" width="1" height="316.6"/><rect x="762" y="230.7" width="1" height="324.3"/><rect x="763" y="221.4" width="1" height="333.6"/><rect x="764" y="217.5" width="1" height="337.5"/><rect x="765" y="215" width="1" height="340"/><rect x="766" y="212.5" width="1" height="342.5"/><rect x="767" y="210.1" width="1" height="344.9"/><rect x="768" y="210.7" width="1" height="344.3"/><rect x="769" y="208.7" width="1" height="346.3"/><rect x="770" y="211.9" width="1" height="343.1"/><rect x="771" y="214.8" width="1" height="340.2"/><rect x="772" y="216.8" width="1" height="338.2"/><rect x="773" y="215.6" width="1" height="339.4"/><rect x="774" y="217.4" width="1" height="337.6"/><rect x="775" y="224.4" width="1" height="330.6"/><rect x="776" y="226.3" width="1" height="328.7"/><rect x="777" y="231" width="1" height="324"/><rect x="778" y="235.2" width="1" height="319.8"/><rect x="779" y="238" width="1" height="317"/><rect x="780" y="238.8" width="1" height="316.2"/><rect x="781" y="239.6" width="1" height="315.4"/><rect x="782" y="243.2" width="1" height="311.8"/><rect x="783" y="243.3" width="1" height="311.7"/><rect x="784" y="247.2" width="1" height="307.8"/><rect x="785" y="247.1" width="1" height="307.9"/><rect x="786" y="249.9" width="1" height="305.1"/><rect x="787" y="248.4" width="1" height="306.6"/><rect x="788" y="247.2" width="1" height="307.8"/><rect x="789" y="247.4" width="1" height="307.6"/><rect x="790" y="245" width="1" height="310"/><rect x="791" y="246.3" width="1" height="308.7"/><rect x="792" y="246.3" width="1" height="308.7"/><rect x="793" y="244" width="1" height="311"/><rect x="794" y="244.8" width="1" height="310.2"/><rect x="795" y="243.2" width="1" height="311.8"/><rect x="796" y="241.5" width="1" height="313.5"/><rect x="797" y="240.3" width="1" height="314.7"/><rect x="798" y="241" width="1" height="314"/><rect x="799" y="240.9" width="1" height="314.1"/><rect x="800" y="238.1" width="1" height="316.9"/><rect x="801" y="239.7" width="1" height="315.3"/><rect x="802" y="238.1" width="1" height="316.9"/><rect x="803" y="239.1" width="1" height="315.9"/><rect x="804" y="241.7" width="1" height="313.3"/><rect x="805" y="242.8" width="1" height="312.2"/><rect x="806" y="244.5" width="1" height="310.5"/><rect x="807" y="246.8" width="1" height="308.2"/><rect x="808" y="250.7" width="1" height="304.3"/><rect x="809" y="254.7" width="1" height="300.3"/><rect x="810" y="259.6" width="1" height="295.4"/><rect x="811" y="263.8" width="1" height="291.2"/><rect x="812" y="268.9" width="1" height="286.1"/><rect x="813" y="273.8" width="1" height="281.2"/><rect x="814" y="279" width="1" height="276"/><rect x="815" y="288.2" width="1" height="266.8"/><rect x="816" y="296.2" width="1" height="258.8"/><rect x="817" y="303" width="1" height="252"/><rect x="818" y="312.7" width="1" height="242.3"/><rect x="819" y="321.1" width="1" height="233.9"/><rect x="820" y="330.9" width="1" height="224.1"/><rect x="821" y="338.6" width="1" height="216.4"/><rect x="822" y="346.8" width="1" height="208.2"/><rect x="823" y="356.7" width="1" height="198.3"/><rect x="824" y="364.1" width="1" height="190.9"/><rect x="825" y="372.7" width="1" height="182.3"/><rect x="826" y="382.4" width="1" height="172.6"/><rect x="827" y="390" width="1" height="165"/><rect x="828" y="399" width="1" height="156"/><rect x="829" y="407.7" width="1" height="147.3"/><rect x="830" y="417.5" width="1" height="137.5"/><rect x="831" y="427" width="1" height="128"/><rect x="832" y="437.6" width="1" height="117.4"/><rect x="833" y="449" width="1" height="106"/><rect x="834" y="458.6" width="1" height="96.4"/><rect x="835" y="466.3" width="1" height="88.7"/><rect x="836" y="473.9" width="1" height="81.1"/><rect x="837" y="482.3" width="1" height="72.7"/><rect x="838" y="489.3" width="1" height="65.7"/><rect x="839" y="495.7" width="1" height="59.3"/><rect x="840" y="502" width="1" height="53"/><rect x="841" y="507.1" width="1" height="47.9"/><rect x="842" y="511.6" width="1" height="43.4"/><rect x="843" y="515.3" width="1" height="39.7"/><rect x="844" y="518.6" width="1" height="36.4"/><rect x="845" y="522.2" width="1" height="32.8"/><rect x="846" y="525.4" width="1" height="29.6"/><rect x="847" y="528.1" width="1" height="26.9"/><rect x="848" y="531.4" width="1" height="23.6"/><rect x="849" y="533.4" width="1" height="21.6"/><rect x="850" y="535.5" width="1" height="19.5"/><rect x="851" y="537.9" width="1" height="17.1"/><rect x="852" y="539.7" width="1" height="15.3"/><rect x="853" y="540.8" width="1" height="14.2"/><rect x="854" y="542.3" width="1" height="12.7"/><rect x="855" y="543.4" width="1" height="11.6"/><rect x="856" y="544.2" width="1" height="10.8"/><rect x="857" y="544.9" width="1" height="10.1"/><rect x="858" y="546.1" width="1" height="8.9"/><rect x="859" y="546.7" width="1" height="8.3"/><rect x="860" y="547.3" width="1" height="7.7"/><rect x="861" y="547.6" width="1" height="7.4"/><rect x="862" y="548.4" width="1" height="6.6"/><rect x="863" y="548.7" width="1" height="6.3"/><rect x="864" y="549.4" width="1" height="5.6"/><rect x="865" y="549.9" width="1" height="5.1"/><rect x="866" y="550.3" width="1" height="4.7"/><rect x="867" y="550.7" width="1" height="4.3"/><rect x="868" y="551.1" width="1" height="3.9"/><rect x="869" y="551.4" width="1" height="3.6"/><rect x="870" y="551.6" width="1" height="3.4"/><rect x="871" y="551.9" width="1" height="3.1"/><rect x="872" y="552.1" width="1" height="2.9"/><rect x="873" y="552.4" width="1" height="2.6"/><rect x="874" y="552.6" width="1" height="2.4"/><rect x="875" y="552.8" width="1" height="2.2"/><rect x="876" y="553" width="1" height="2"/><rect x="877" y="553.2" width="1" height="1.8"/><rect x="878" y="553.4" width="1" height="1.6"/><rect x="879" y="553.5" width="1" height="1.5"/><rect x="880" y="553.7" width="1" height="1.3"/><rect x="881" y="553.8" width="1" height="1.2"/><rect x="882" y="553.9" width="1" height="1.1"/><rect x="883" y="554" width="1" height="1"/><rect x="884" y="554" width="1" height="1"/><rect x="885" y="554.1" width="1" height="0.9"/><rect x="886" y="554.2" width="1" height="0.8"/><rect x="887" y="554.2" width="1" height="0.8"/><rect x="888" y="554.3" width="1" height="0.7"/><rect x="889" y="554.3" width="1" height="0.7"/><rect x="890" y="554.4" width="1" height="0.6"/><rect x="891" y="554.4" width="1" height="0.6"/><rect x="892" y="554.5" width="1" height="0.5"/><rect x="893" y="554.5" width="1" height="0.5"/><rect x="894" y="554.6" width="1" height="0.4"/><rect x="895" y="554.6" width="1" height="0.4"/></g>
<path d="M660.5 174.2v5.4M660.5 555.0v-6.8M674.5 174.2v5.4M674.5 555.0v-6.8M688.5 174.2v5.4M688.5 555.0v-6.8M702.4 174.2v5.4M730.4 174.2v5.4M744.3 174.2v5.4M744.3 555.0v-6.8M758.3 174.2v5.4M758.3 555.0v-6.8M772.3 174.2v5.4M800.2 174.2v5.4M814.2 174.2v5.4M814.2 555.0v-6.8M828.2 174.2v5.4M828.2 555.0v-6.8M842.1 174.2v5.4M870.1 174.2v5.4M884.0 174.2v5.4M884.0 555.0v-6.8M898.0 174.2v5.4M898.0 555.0v-6.8M912.0 174.2v5.4M939.9 174.2v5.4M953.9 174.2v5.4M953.9 555.0v-6.8M646.75 545.8h5.0M962.1 545.8h-4.2M646.75 536.6h5.0M962.1 536.6h-4.2M646.75 527.3h5.0M962.1 527.3h-4.2M646.75 518.1h5.0M962.1 518.1h-4.2M646.75 499.6h5.0M962.1 499.6h-4.2M646.75 490.3h5.0M962.1 490.3h-4.2M646.75 481.1h5.0M962.1 481.1h-4.2M646.75 471.8h5.0M962.1 471.8h-4.2M646.75 453.3h5.0M962.1 453.3h-4.2M646.75 444.1h5.0M962.1 444.1h-4.2M646.75 434.8h5.0M962.1 434.8h-4.2M646.75 425.5h5.0M962.1 425.5h-4.2M646.75 407.0h5.0M962.1 407.0h-4.2M646.75 397.8h5.0M962.1 397.8h-4.2M646.75 388.5h5.0M962.1 388.5h-4.2M646.75 379.3h5.0M962.1 379.3h-4.2M646.75 360.8h5.0M962.1 360.8h-4.2M646.75 351.5h5.0M962.1 351.5h-4.2M646.75 342.3h5.0M962.1 342.3h-4.2M646.75 333.0h5.0M962.1 333.0h-4.2M646.75 314.5h5.0M962.1 314.5h-4.2M646.75 305.2h5.0M962.1 305.2h-4.2M646.75 296.0h5.0M962.1 296.0h-4.2M646.75 286.7h5.0M962.1 286.7h-4.2M646.75 268.2h5.0M962.1 268.2h-4.2M646.75 259.0h5.0M962.1 259.0h-4.2M646.75 249.7h5.0M962.1 249.7h-4.2M646.75 240.5h5.0M962.1 240.5h-4.2M646.75 222.0h5.0M962.1 222.0h-4.2M646.75 212.7h5.0M962.1 212.7h-4.2M646.75 203.4h5.0M962.1 203.4h-4.2M646.75 194.2h5.0M962.1 194.2h-4.2" stroke="#929292" stroke-width="1" fill="none"/>
<path d="M716.4 174.2v8.3M786.2 174.2v8.3M856.1 174.2v8.3M925.9 174.2v8.3M646.75 508.8h8.0M646.75 462.6h8.0M646.75 416.3h8.0M646.75 370.0h8.0M646.75 323.8h8.0M646.75 277.5h8.0M646.75 231.2h8.0M646.75 184.9h8.0" stroke="#9e9e9e" stroke-width="1.3" fill="none"/>
<g font-size="8.67" fill="#b6b6b6">
<text x="959.6" y="512.0" text-anchor="end">10 khits</text>
<text x="959.6" y="465.8" text-anchor="end">20 khits</text>
<text x="959.6" y="419.5" text-anchor="end">30 khits</text>
<text x="959.6" y="373.2" text-anchor="end">40 khits</text>
<text x="959.6" y="326.9" text-anchor="end">50 khits</text>
<text x="959.6" y="280.7" text-anchor="end">60 khits</text>
<text x="959.6" y="234.4" text-anchor="end">70 khits</text>
<text x="716.4" y="552.6" text-anchor="middle">39.8 MHz</text>
<text x="786.2" y="552.6" text-anchor="middle">40 MHz</text>
<text x="856.1" y="552.6" text-anchor="middle">40.2 MHz</text>
<text x="925.9" y="552.6" text-anchor="middle">40.4 MHz</text>
</g>
<use href="#zoomico" x="932.8" y="179.3"/>
</g>
<g id="plot4">
<rect x="964.6" y="154.3" width="320.9" height="403.2" fill="#8b8987"/>
<rect x="967.1" y="156.0" width="315.80000000000007" height="18.19999999999999" fill="#343432"/>
<rect x="967.1" y="174.2" width="315.80000000000007" height="380.8" fill="#000"/>
<text x="976.7" y="169" font-size="11" fill="#ececec">Plot 4 - Histogram (Meas4)</text>
<use href="#xico" x="1265.3" y="160.9"/>
<path d="M979 517.5h1M993 517.5h1M1007 517.5h1M1021 517.5h1M1036 517.5h1M1050 517.5h1M1064 517.5h1M1078 517.5h1M1093 517.5h1M1107 517.5h1M1121 517.5h1M1135 517.5h1M1150 517.5h1M1164 517.5h1M1178 517.5h1M1192 517.5h1M1207 517.5h1M1221 517.5h1M1235 517.5h1M979 479.5h1M993 479.5h1M1007 479.5h1M1021 479.5h1M1036 479.5h1M1050 479.5h1M1064 479.5h1M1078 479.5h1M1093 479.5h1M1107 479.5h1M1121 479.5h1M1135 479.5h1M1150 479.5h1M1164 479.5h1M1178 479.5h1M1192 479.5h1M1207 479.5h1M1221 479.5h1M1235 479.5h1M979 440.5h1M993 440.5h1M1007 440.5h1M1021 440.5h1M1036 440.5h1M1050 440.5h1M1064 440.5h1M1078 440.5h1M1093 440.5h1M1107 440.5h1M1121 440.5h1M1135 440.5h1M1150 440.5h1M1164 440.5h1M1178 440.5h1M1192 440.5h1M1207 440.5h1M1221 440.5h1M1235 440.5h1M979 402.5h1M993 402.5h1M1007 402.5h1M1021 402.5h1M1036 402.5h1M1050 402.5h1M1064 402.5h1M1078 402.5h1M1093 402.5h1M1107 402.5h1M1121 402.5h1M1135 402.5h1M1150 402.5h1M1164 402.5h1M1178 402.5h1M1192 402.5h1M1207 402.5h1M1221 402.5h1M1235 402.5h1M979 364.5h1M993 364.5h1M1007 364.5h1M1021 364.5h1M1036 364.5h1M1050 364.5h1M1064 364.5h1M1078 364.5h1M1093 364.5h1M1107 364.5h1M1121 364.5h1M1135 364.5h1M1150 364.5h1M1164 364.5h1M1178 364.5h1M1192 364.5h1M1207 364.5h1M1221 364.5h1M1235 364.5h1M979 326.5h1M993 326.5h1M1007 326.5h1M1021 326.5h1M1036 326.5h1M1050 326.5h1M1064 326.5h1M1078 326.5h1M1093 326.5h1M1107 326.5h1M1121 326.5h1M1135 326.5h1M1150 326.5h1M1164 326.5h1M1178 326.5h1M1192 326.5h1M1207 326.5h1M1221 326.5h1M1235 326.5h1M979 287.5h1M993 287.5h1M1007 287.5h1M1021 287.5h1M1036 287.5h1M1050 287.5h1M1064 287.5h1M1078 287.5h1M1093 287.5h1M1107 287.5h1M1121 287.5h1M1135 287.5h1M1150 287.5h1M1164 287.5h1M1178 287.5h1M1192 287.5h1M1207 287.5h1M1221 287.5h1M1235 287.5h1M979 249.5h1M993 249.5h1M1007 249.5h1M1021 249.5h1M1036 249.5h1M1050 249.5h1M1064 249.5h1M1078 249.5h1M1093 249.5h1M1107 249.5h1M1121 249.5h1M1135 249.5h1M1150 249.5h1M1164 249.5h1M1178 249.5h1M1192 249.5h1M1207 249.5h1M1221 249.5h1M1235 249.5h1M979 211.5h1M993 211.5h1M1007 211.5h1M1021 211.5h1M1036 211.5h1M1050 211.5h1M1064 211.5h1M1078 211.5h1M1093 211.5h1M1107 211.5h1M1121 211.5h1M1135 211.5h1M1150 211.5h1M1164 211.5h1M1178 211.5h1M1192 211.5h1M1207 211.5h1M1221 211.5h1M1235 211.5h1M993 547.5h1M993 540.5h1M993 532.5h1M993 524.5h1M993 509.5h1M993 501.5h1M993 494.5h1M993 486.5h1M993 471.5h1M993 463.5h1M993 456.5h1M993 448.5h1M993 433.5h1M993 425.5h1M993 417.5h1M993 410.5h1M993 394.5h1M993 387.5h1M993 379.5h1M993 371.5h1M993 356.5h1M993 349.5h1M993 341.5h1M993 333.5h1M993 318.5h1M993 310.5h1M993 303.5h1M993 295.5h1M993 280.5h1M993 272.5h1M993 264.5h1M993 257.5h1M993 242.5h1M993 234.5h1M993 226.5h1M993 219.5h1M993 203.5h1M993 196.5h1M993 188.5h1M993 180.5h1M1064 547.5h1M1064 540.5h1M1064 532.5h1M1064 524.5h1M1064 509.5h1M1064 501.5h1M1064 494.5h1M1064 486.5h1M1064 471.5h1M1064 463.5h1M1064 456.5h1M1064 448.5h1M1064 433.5h1M1064 425.5h1M1064 417.5h1M1064 410.5h1M1064 394.5h1M1064 387.5h1M1064 379.5h1M1064 371.5h1M1064 356.5h1M1064 349.5h1M1064 341.5h1M1064 333.5h1M1064 318.5h1M1064 310.5h1M1064 303.5h1M1064 295.5h1M1064 280.5h1M1064 272.5h1M1064 264.5h1M1064 257.5h1M1064 242.5h1M1064 234.5h1M1064 226.5h1M1064 219.5h1M1064 203.5h1M1064 196.5h1M1064 188.5h1M1064 180.5h1M1135 547.5h1M1135 540.5h1M1135 532.5h1M1135 524.5h1M1135 509.5h1M1135 501.5h1M1135 494.5h1M1135 486.5h1M1135 471.5h1M1135 463.5h1M1135 456.5h1M1135 448.5h1M1135 433.5h1M1135 425.5h1M1135 417.5h1M1135 410.5h1M1135 394.5h1M1135 387.5h1M1135 379.5h1M1135 371.5h1M1135 356.5h1M1135 349.5h1M1135 341.5h1M1135 333.5h1M1135 318.5h1M1135 310.5h1M1135 303.5h1M1135 295.5h1M1135 280.5h1M1135 272.5h1M1135 264.5h1M1135 257.5h1M1135 242.5h1M1135 234.5h1M1135 226.5h1M1135 219.5h1M1135 203.5h1M1135 196.5h1M1135 188.5h1M1135 180.5h1M1207 547.5h1M1207 540.5h1M1207 532.5h1M1207 524.5h1M1207 509.5h1M1207 501.5h1M1207 494.5h1M1207 486.5h1M1207 471.5h1M1207 463.5h1M1207 456.5h1M1207 448.5h1M1207 433.5h1M1207 425.5h1M1207 417.5h1M1207 410.5h1M1207 394.5h1M1207 387.5h1M1207 379.5h1M1207 371.5h1M1207 356.5h1M1207 349.5h1M1207 341.5h1M1207 333.5h1M1207 318.5h1M1207 310.5h1M1207 303.5h1M1207 295.5h1M1207 280.5h1M1207 272.5h1M1207 264.5h1M1207 257.5h1M1207 242.5h1M1207 234.5h1M1207 226.5h1M1207 219.5h1M1207 203.5h1M1207 196.5h1M1207 188.5h1M1207 180.5h1M1278 547.5h1M1278 540.5h1M1278 532.5h1M1278 524.5h1M1278 509.5h1M1278 501.5h1M1278 494.5h1M1278 486.5h1M1278 471.5h1M1278 463.5h1M1278 456.5h1M1278 448.5h1M1278 433.5h1M1278 425.5h1M1278 417.5h1M1278 410.5h1M1278 394.5h1M1278 387.5h1M1278 379.5h1M1278 371.5h1M1278 356.5h1M1278 349.5h1M1278 341.5h1M1278 333.5h1M1278 318.5h1M1278 310.5h1M1278 303.5h1M1278 295.5h1M1278 280.5h1M1278 272.5h1M1278 264.5h1M1278 257.5h1M1278 242.5h1M1278 234.5h1M1278 226.5h1M1278 219.5h1M1278 203.5h1M1278 196.5h1M1278 188.5h1M1278 180.5h1" stroke="#707070" stroke-width="1" fill="none"/>
<g fill="url(#hg)" shape-rendering="crispEdges"><rect x="1005" y="554.6" width="1" height="0.4"/><rect x="1006" y="554.6" width="1" height="0.4"/><rect x="1007" y="554.5" width="1" height="0.5"/><rect x="1008" y="554.4" width="1" height="0.6"/><rect x="1009" y="554.3" width="1" height="0.7"/><rect x="1010" y="554.2" width="1" height="0.8"/><rect x="1011" y="554.1" width="1" height="0.9"/><rect x="1012" y="554" width="1" height="1"/><rect x="1013" y="553.8" width="1" height="1.2"/><rect x="1014" y="553.7" width="1" height="1.3"/><rect x="1015" y="553.5" width="1" height="1.5"/><rect x="1016" y="553.3" width="1" height="1.7"/><rect x="1017" y="553.2" width="1" height="1.8"/><rect x="1018" y="553" width="1" height="2"/><rect x="1019" y="552.8" width="1" height="2.2"/><rect x="1020" y="552.6" width="1" height="2.4"/><rect x="1021" y="552.4" width="1" height="2.6"/><rect x="1022" y="552.2" width="1" height="2.8"/><rect x="1023" y="552" width="1" height="3"/><rect x="1024" y="551.8" width="1" height="3.2"/><rect x="1025" y="551.6" width="1" height="3.4"/><rect x="1026" y="551.4" width="1" height="3.6"/><rect x="1027" y="551.1" width="1" height="3.9"/><rect x="1028" y="550.9" width="1" height="4.1"/><rect x="1029" y="550.7" width="1" height="4.3"/><rect x="1030" y="550.4" width="1" height="4.6"/><rect x="1031" y="550.1" width="1" height="4.9"/><rect x="1032" y="549.9" width="1" height="5.1"/><rect x="1033" y="549.6" width="1" height="5.4"/><rect x="1034" y="549.3" width="1" height="5.7"/><rect x="1035" y="549" width="1" height="6"/><rect x="1036" y="548.8" width="1" height="6.2"/><rect x="1037" y="548.6" width="1" height="6.4"/><rect x="1038" y="548.1" width="1" height="6.9"/><rect x="1039" y="547.8" width="1" height="7.2"/><rect x="1040" y="547.5" width="1" height="7.5"/><rect x="1041" y="547" width="1" height="8"/><rect x="1042" y="546.3" width="1" height="8.7"/><rect x="1043" y="546" width="1" height="9"/><rect x="1044" y="545.6" width="1" height="9.4"/><rect x="1045" y="545.6" width="1" height="9.4"/><rect x="1046" y="545" width="1" height="10"/><rect x="1047" y="544.8" width="1" height="10.2"/><rect x="1048" y="544.6" width="1" height="10.4"/><rect x="1049" y="544.3" width="1" height="10.7"/><rect x="1050" y="543.9" width="1" height="11.1"/><rect x="1051" y="543.2" width="1" height="11.8"/><rect x="1052" y="542.9" width="1" height="12.1"/><rect x="1053" y="542.6" width="1" height="12.4"/><rect x="1054" y="542.3" width="1" height="12.7"/><rect x="1055" y="542.3" width="1" height="12.7"/><rect x="1056" y="541.9" width="1" height="13.1"/><rect x="1057" y="541.4" width="1" height="13.6"/><rect x="1058" y="540.9" width="1" height="14.1"/><rect x="1059" y="540.4" width="1" height="14.6"/><rect x="1060" y="540" width="1" height="15"/><rect x="1061" y="540" width="1" height="15"/><rect x="1062" y="539.2" width="1" height="15.8"/><rect x="1063" y="538.7" width="1" height="16.3"/><rect x="1064" y="538.3" width="1" height="16.7"/><rect x="1065" y="538" width="1" height="17"/><rect x="1066" y="537.2" width="1" height="17.8"/><rect x="1067" y="536.9" width="1" height="18.1"/><rect x="1068" y="535.7" width="1" height="19.3"/><rect x="1069" y="535" width="1" height="20"/><rect x="1070" y="534.5" width="1" height="20.5"/><rect x="1071" y="533.8" width="1" height="21.2"/><rect x="1072" y="532.5" width="1" height="22.5"/><rect x="1073" y="531.8" width="1" height="23.2"/><rect x="1074" y="530.6" width="1" height="24.4"/><rect x="1075" y="529.7" width="1" height="25.3"/><rect x="1076" y="528.9" width="1" height="26.1"/><rect x="1077" y="528" width="1" height="27"/><rect x="1078" y="526.7" width="1" height="28.3"/><rect x="1079" y="525.7" width="1" height="29.3"/><rect x="1080" y="524.6" width="1" height="30.4"/><rect x="1081" y="523.1" width="1" height="31.9"/><rect x="1082" y="521.1" width="1" height="33.9"/><rect x="1083" y="519.8" width="1" height="35.2"/><rect x="1084" y="517.6" width="1" height="37.4"/><rect x="1085" y="514.7" width="1" height="40.3"/><rect x="1086" y="512.4" width="1" height="42.6"/><rect x="1087" y="509.4" width="1" height="45.6"/><rect x="1088" y="506.4" width="1" height="48.6"/><rect x="1089" y="503" width="1" height="52"/><rect x="1090" y="498.2" width="1" height="56.8"/><rect x="1091" y="493.4" width="1" height="61.6"/><rect x="1092" y="486.9" width="1" height="68.1"/><rect x="1093" y="480.8" width="1" height="74.2"/><rect x="1094" y="474.6" width="1" height="80.4"/><rect x="1095" y="469.6" width="1" height="85.4"/><rect x="1096" y="464.2" width="1" height="90.8"/><rect x="1097" y="458.4" width="1" height="96.6"/><rect x="1098" y="453.6" width="1" height="101.4"/><rect x="1099" y="447.7" width="1" height="107.3"/><rect x="1100" y="441.3" width="1" height="113.7"/><rect x="1101" y="436.1" width="1" height="118.9"/><rect x="1102" y="429.5" width="1" height="125.5"/><rect x="1103" y="422.3" width="1" height="132.7"/><rect x="1104" y="414.3" width="1" height="140.7"/><rect x="1105" y="407.1" width="1" height="147.9"/><rect x="1106" y="400.2" width="1" height="154.8"/><rect x="1107" y="392.1" width="1" height="162.9"/><rect x="1108" y="384.3" width="1" height="170.7"/><rect x="1109" y="375.4" width="1" height="179.6"/><rect x="1110" y="367.8" width="1" height="187.2"/><rect x="1111" y="357.9" width="1" height="197.1"/><rect x="1112" y="348.7" width="1" height="206.3"/><rect x="1113" y="339.6" width="1" height="215.4"/><rect x="1114" y="331" width="1" height="224"/><rect x="1115" y="321.2" width="1" height="233.8"/><rect x="1116" y="314.3" width="1" height="240.7"/><rect x="1117" y="304.5" width="1" height="250.5"/><rect x="1118" y="293.7" width="1" height="261.3"/><rect x="1119" y="285.3" width="1" height="269.7"/><rect x="1120" y="277.7" width="1" height="277.3"/><rect x="1121" y="267.7" width="1" height="287.3"/><rect x="1122" y="260.9" width="1" height="294.1"/><rect x="1123" y="253.1" width="1" height="301.9"/><rect x="1124" y="248.1" width="1" height="306.9"/><rect x="1125" y="242.3" width="1" height="312.7"/><rect x="1126" y="236.1" width="1" height="318.9"/><rect x="1127" y="232.5" width="1" height="322.5"/><rect x="1128" y="227.7" width="1" height="327.3"/><rect x="1129" y="222.2" width="1" height="332.8"/><rect x="1130" y="221.1" width="1" height="333.9"/><rect x="1131" y="219.5" width="1" height="335.5"/><rect x="1132" y="217" width="1" height="338"/><rect x="1133" y="214.5" width="1" height="340.5"/><rect x="1134" y="210.9" width="1" height="344.1"/><rect x="1135" y="210.8" width="1" height="344.2"/><rect x="1136" y="209.9" width="1" height="345.1"/><rect x="1137" y="210.5" width="1" height="344.5"/><rect x="1138" y="208.9" width="1" height="346.1"/><rect x="1139" y="212.2" width="1" height="342.8"/><rect x="1140" y="214.5" width="1" height="340.5"/><rect x="1141" y="217" width="1" height="338"/><rect x="1142" y="219.3" width="1" height="335.7"/><rect x="1143" y="221.6" width="1" height="333.4"/><rect x="1144" y="223.8" width="1" height="331.2"/><rect x="1145" y="229.9" width="1" height="325.1"/><rect x="1146" y="235" width="1" height="320"/><rect x="1147" y="238.2" width="1" height="316.8"/><rect x="1148" y="243.6" width="1" height="311.4"/><rect x="1149" y="246.4" width="1" height="308.6"/><rect x="1150" y="254.1" width="1" height="300.9"/><rect x="1151" y="258.3" width="1" height="296.7"/><rect x="1152" y="264.2" width="1" height="290.8"/><rect x="1153" y="275.3" width="1" height="279.7"/><rect x="1154" y="282.9" width="1" height="272.1"/><rect x="1155" y="292.2" width="1" height="262.8"/><rect x="1156" y="300.3" width="1" height="254.7"/><rect x="1157" y="306.9" width="1" height="248.1"/><rect x="1158" y="314.5" width="1" height="240.5"/><rect x="1159" y="320" width="1" height="235"/><rect x="1160" y="326.8" width="1" height="228.2"/><rect x="1161" y="331.6" width="1" height="223.4"/><rect x="1162" y="338.1" width="1" height="216.9"/><rect x="1163" y="345.4" width="1" height="209.6"/><rect x="1164" y="353.1" width="1" height="201.9"/><rect x="1165" y="359.8" width="1" height="195.2"/><rect x="1166" y="367.3" width="1" height="187.7"/><rect x="1167" y="375.2" width="1" height="179.8"/><rect x="1168" y="383.1" width="1" height="171.9"/><rect x="1169" y="389.9" width="1" height="165.1"/><rect x="1170" y="398.9" width="1" height="156.1"/><rect x="1171" y="406.4" width="1" height="148.6"/><rect x="1172" y="412" width="1" height="143"/><rect x="1173" y="419.4" width="1" height="135.6"/><rect x="1174" y="425.5" width="1" height="129.5"/><rect x="1175" y="433.2" width="1" height="121.8"/><rect x="1176" y="439.3" width="1" height="115.7"/><rect x="1177" y="446.8" width="1" height="108.2"/><rect x="1178" y="454.1" width="1" height="100.9"/><rect x="1179" y="461.6" width="1" height="93.4"/><rect x="1180" y="469" width="1" height="86"/><rect x="1181" y="476.1" width="1" height="78.9"/><rect x="1182" y="481.9" width="1" height="73.1"/><rect x="1183" y="486.6" width="1" height="68.4"/><rect x="1184" y="491.7" width="1" height="63.3"/><rect x="1185" y="496.4" width="1" height="58.6"/><rect x="1186" y="501.5" width="1" height="53.5"/><rect x="1187" y="505.5" width="1" height="49.5"/><rect x="1188" y="509.4" width="1" height="45.6"/><rect x="1189" y="513.2" width="1" height="41.8"/><rect x="1190" y="516.4" width="1" height="38.6"/><rect x="1191" y="519.8" width="1" height="35.2"/><rect x="1192" y="522.7" width="1" height="32.3"/><rect x="1193" y="525.5" width="1" height="29.5"/><rect x="1194" y="528.4" width="1" height="26.6"/><rect x="1195" y="530.5" width="1" height="24.5"/><rect x="1196" y="533" width="1" height="22"/><rect x="1197" y="535.9" width="1" height="19.1"/><rect x="1198" y="537.4" width="1" height="17.6"/><rect x="1199" y="539.2" width="1" height="15.8"/><rect x="1200" y="541.1" width="1" height="13.9"/><rect x="1201" y="543" width="1" height="12"/><rect x="1202" y="543.9" width="1" height="11.1"/><rect x="1203" y="545.6" width="1" height="9.4"/><rect x="1204" y="546.2" width="1" height="8.8"/><rect x="1205" y="547.4" width="1" height="7.6"/><rect x="1206" y="548.8" width="1" height="6.2"/><rect x="1207" y="549.4" width="1" height="5.6"/><rect x="1208" y="550.2" width="1" height="4.8"/><rect x="1209" y="550.9" width="1" height="4.1"/><rect x="1210" y="551.4" width="1" height="3.6"/><rect x="1211" y="551.8" width="1" height="3.2"/><rect x="1212" y="552.2" width="1" height="2.8"/><rect x="1213" y="552.5" width="1" height="2.5"/><rect x="1214" y="552.8" width="1" height="2.2"/><rect x="1215" y="553.1" width="1" height="1.9"/><rect x="1216" y="553.4" width="1" height="1.6"/><rect x="1217" y="553.6" width="1" height="1.4"/><rect x="1218" y="553.8" width="1" height="1.2"/><rect x="1219" y="554" width="1" height="1"/><rect x="1220" y="554.1" width="1" height="0.9"/><rect x="1221" y="554.2" width="1" height="0.8"/><rect x="1222" y="554.3" width="1" height="0.7"/><rect x="1223" y="554.3" width="1" height="0.7"/><rect x="1224" y="554.4" width="1" height="0.6"/><rect x="1225" y="554.4" width="1" height="0.6"/><rect x="1226" y="554.5" width="1" height="0.5"/><rect x="1227" y="554.5" width="1" height="0.5"/><rect x="1228" y="554.5" width="1" height="0.5"/><rect x="1229" y="554.6" width="1" height="0.4"/><rect x="1230" y="554.6" width="1" height="0.4"/><rect x="1231" y="554.6" width="1" height="0.4"/></g>
<path d="M979.3 174.2v5.4M1007.7 174.2v5.4M1022.0 174.2v5.4M1022.0 555.0v-6.8M1036.2 174.2v5.4M1036.2 555.0v-6.8M1050.5 174.2v5.4M1078.9 174.2v5.4M1093.2 174.2v5.4M1093.2 555.0v-6.8M1107.4 174.2v5.4M1107.4 555.0v-6.8M1121.7 174.2v5.4M1121.7 555.0v-6.8M1150.1 174.2v5.4M1150.1 555.0v-6.8M1164.4 174.2v5.4M1164.4 555.0v-6.8M1178.6 174.2v5.4M1178.6 555.0v-6.8M1192.9 174.2v5.4M1221.3 174.2v5.4M1235.6 174.2v5.4M1235.6 555.0v-6.8M1249.8 174.2v5.4M1249.8 555.0v-6.8M1264.1 174.2v5.4M1264.1 555.0v-6.8M1278.3 555.0v-6.8M967.1 547.9h5.0M1282.9 547.9h-4.2M967.1 540.2h5.0M1282.9 540.2h-4.2M967.1 532.6h5.0M1282.9 532.6h-4.2M967.1 524.9h5.0M1282.9 524.9h-4.2M967.1 509.6h5.0M1282.9 509.6h-4.2M967.1 502.0h5.0M1282.9 502.0h-4.2M967.1 494.3h5.0M1282.9 494.3h-4.2M967.1 486.7h5.0M1282.9 486.7h-4.2M967.1 471.4h5.0M1282.9 471.4h-4.2M967.1 463.7h5.0M1282.9 463.7h-4.2M967.1 456.1h5.0M1282.9 456.1h-4.2M967.1 448.5h5.0M1282.9 448.5h-4.2M967.1 433.2h5.0M1282.9 433.2h-4.2M967.1 425.5h5.0M1282.9 425.5h-4.2M967.1 417.9h5.0M1282.9 417.9h-4.2M967.1 410.2h5.0M1282.9 410.2h-4.2M967.1 394.9h5.0M1282.9 394.9h-4.2M967.1 387.3h5.0M1282.9 387.3h-4.2M967.1 379.6h5.0M1282.9 379.6h-4.2M967.1 372.0h5.0M1282.9 372.0h-4.2M967.1 356.7h5.0M1282.9 356.7h-4.2M967.1 349.1h5.0M1282.9 349.1h-4.2M967.1 341.4h5.0M1282.9 341.4h-4.2M967.1 333.8h5.0M1282.9 333.8h-4.2M967.1 318.5h5.0M1282.9 318.5h-4.2M967.1 310.8h5.0M1282.9 310.8h-4.2M967.1 303.2h5.0M1282.9 303.2h-4.2M967.1 295.5h5.0M1282.9 295.5h-4.2M967.1 280.2h5.0M1282.9 280.2h-4.2M967.1 272.6h5.0M1282.9 272.6h-4.2M967.1 265.0h5.0M1282.9 265.0h-4.2M967.1 257.3h5.0M1282.9 257.3h-4.2M967.1 242.0h5.0M1282.9 242.0h-4.2M967.1 234.4h5.0M1282.9 234.4h-4.2M967.1 226.7h5.0M1282.9 226.7h-4.2M967.1 219.1h5.0M1282.9 219.1h-4.2M967.1 203.8h5.0M1282.9 203.8h-4.2M967.1 196.1h5.0M1282.9 196.1h-4.2M967.1 188.5h5.0M1282.9 188.5h-4.2M967.1 180.8h5.0M1282.9 180.8h-4.2" stroke="#929292" stroke-width="1" fill="none"/>
<path d="M993.5 174.2v8.3M1064.7 174.2v8.3M1135.9 174.2v8.3M1207.1 174.2v8.3M1278.3 174.2v8.3M967.1 517.3h8.0M967.1 479.0h8.0M967.1 440.8h8.0M967.1 402.6h8.0M967.1 364.4h8.0M967.1 326.1h8.0M967.1 287.9h8.0M967.1 249.7h8.0M967.1 211.4h8.0" stroke="#9e9e9e" stroke-width="1.3" fill="none"/>
<g font-size="8.67" fill="#b6b6b6">
<text x="1279.5" y="520.5" text-anchor="end">10 khits</text>
<text x="1279.5" y="482.2" text-anchor="end">20 khits</text>
<text x="1279.5" y="444.0" text-anchor="end">30 khits</text>
<text x="1279.5" y="405.8" text-anchor="end">40 khits</text>
<text x="1279.5" y="367.6" text-anchor="end">50 khits</text>
<text x="1279.5" y="329.3" text-anchor="end">60 khits</text>
<text x="1279.5" y="291.1" text-anchor="end">70 khits</text>
<text x="1279.5" y="252.9" text-anchor="end">80 khits</text>
<text x="1279.5" y="214.6" text-anchor="end">90 khits</text>
<text x="993.5" y="552.6" text-anchor="middle">-200 ps</text>
<text x="1064.7" y="552.6" text-anchor="middle">-100 ps</text>
<text x="1135.9" y="552.6" text-anchor="middle">0 s</text>
<text x="1207.1" y="552.6" text-anchor="middle">100 ps</text>
</g>
<use href="#zoomico" x="1253.6" y="179.3"/>
</g>
</svg>
<svg class="layer wave" width="1410" height="797" viewBox="0 0 1410 797">
<rect x="3" y="557.5" width="1283" height="174.5" fill="#8b8987"/>
<rect x="3" y="557.5" width="1283" height="2.5" fill="#9b9997"/>
<rect x="5.3" y="560" width="1278.1" height="18" fill="#343432"/>
<rect x="5.3" y="577.2" width="1278.1" height="0.9" fill="#6a6a68"/>
<rect x="5.3" y="578.0" width="1278.1" height="151.75" fill="#000"/>
<text x="14.8" y="572.6" font-size="11" fill="#ececec">Waveform View</text>
<g stroke="#cdcdcd" fill="none"><path d="M432.2 569.2H856.6" stroke="#bdbdbd" stroke-width="1.7"/><path d="M437 562.9H432.2V574.5H437" stroke-width="1.3"/><path d="M852 562.9H856.6V574.5H852" stroke-width="1.3"/></g>
<clipPath id="cpw"><rect x="5.3" y="578.0" width="1278.1" height="151.75"/></clipPath>
<g clip-path="url(#cpw)">
<path d="M5 585.5h2h2v0.1h1v-0.4h1v0.3h3v0.2h3v-0.2h1v-0.5h2v0.7h1v-0.1h1v-0.1h2h3v-0.2h1h1v-0.3h3v0.7h1v-0.1h1v0.3h1v-0.4h2h3v0.4h3v-0.4h3v-0.2h1v0.4h3v-0.2h2h3h3v0.2h3v-0.1h2v-0.4h2v0.1h2v-0.1h2v0.5h2h1v-0.4h1v0.3h2v-0.4h2v-0.4h4v0.5h2v0.2h1v-0.5h3v0.2h1v-0.4h1v0.7h2h4v-0.2h3v-0.1h2h4v-0.4h3h3v0.7h1v-0.7h2v0.7h4v0.4h1v-0.6h4v-0.5h4v0.2h2v0.2h4v-0.4h1v0.7h2h3h2v0.4h1v-0.2h1v-0.7h2v0.5h2v-0.7h1v0.8h2v-0.1h2v0.1h2v-0.6h2h2v0.5h1h1v0.2h1h4v-0.9h1v0.7h3v0.4h2v-0.4h1v0.1h2v-0.3h2v-0.1h3v0.4h1v-0.1h3v0.1h2v-0.6h2h2v-0.2h1v0.2h4v0.7h1h1v-0.2h2v-0.3h1v0.3h3h1h3h3v-0.2h2v0.2h1v-0.2h1v0.2h2v0.4h4v-0.6h2v-0.5h2v0.7h1v-0.7h2h2v0.7h2h1v-0.3h4v0.7h4v-0.4h2h3v0.1h1v-0.1h2v0.1h4h1v-0.1h2v0.4h4v-0.7h3h1v0.4h1h3v0.1h2h3v-0.7h1v0.7h4v-0.1h1v-0.4h2v0.3h4v0.4h1h2v-0.6h1v-0.5h2v0.4h4v0.3h2h1v-0.7h1v0.4h1v-0.4h1v0.5h3v-0.5h1v0.4h4v0.3h4h4v0.2h2v-0.2h2v-0.3h2v-0.2h1h2v0.5h4h4h1h1v-0.7h3v0.7h4v-0.2h3v-0.1h2v0.4h1v-0.1h3h1h4h3v0.2h2v-0.2h1v0.2h2v-0.1h2v-0.3h1v0.6h2v-0.9h3v0.5h1v-0.3h4v0.1h2v-0.3h3v0.5h3h3v0.1h3v-0.8h1v0.5h1v0.2h1h1v-0.2h2v0.2h4h3v0.1h2h3v-0.1h2h3v0.2h1v-0.2h2v0.1h1h2v-0.1h1v-0.3h2v0.4h3h3v0.3h1v-0.3h2v-0.8h3v0.9h3v-0.1h4h2v-0.8h1v0.2h1h1v0.2h2v0.5h1v-0.2h2v0.4h1v-0.4h1v-0.3h4v0.7h1v-1.1h1v0.7h1v-0.7h2v0.9h1v-0.7h1h3h2v0.2h1v0.3h2v-0.3h4h1v-0.4h3v0.7h2v-0.3h2v0.1h3v0.3h2v-0.1h1h1v0.4h1v-0.4h2v0.4h1v-0.9h1v0.9h4v-0.4h2v0.1h3v-0.8h3v0.4h4v0.7h1v-0.4h1h2h2h4h2v0.2h3v0.2h1v-1.1h1v0.4h1v-0.2h3v0.3h2v0.2h1v0.2h3v-0.2h1h2v0.2h1v0.2h2v-0.2h3v-0.9h2v0.7h3v-0.3h2v0.7h1v-0.4h1v0.1h1v0.1h3v-0.9h3h1v0.2h1v-0.2h4v0.2h3v0.9h3v-0.2h4v-0.5h1v0.3h1v-0.3h2v0.3h1h1v0.4h4v-0.4h2h1v-0.5h4v0.9h3v-0.2h3v0.2h4v-1.1h1v0.7h1v-0.7h2v1.1h1v-0.7h2h3v0.3h1v0.2h2v-0.2h2v-0.3h1v0.3h2v0.4h2v-0.2h3v-0.1h1v-0.1h1h2v-0.5h1v0.5h3h2v0.4h2v-0.2h4v-0.4h1v0.2h3v-0.2h4v-0.1h2v-0.4h4v1.1h1v-0.6h4v0.2h4v0.1h1v-0.6h4v0.6h4h1v-0.3h3h1v0.4h4v-0.2h1h1v-0.3h4v-0.2h1v0.6h2v-0.1h1v0.1h4v0.1h4v0.2h2v-1.1h1v0.8h1v-0.1h3v0.1h4v-0.8h1v0.7h2v0.2h2h4v-0.9h1v0.2h2v-0.2h1v1.1h4v-0.6h1v0.4h4v-0.4h1v-0.1h1v0.7h2v-0.6h3v0.2h1h2v0.4h2v-0.4h4v0.2h4v-0.9h4v0.8h2v-0.8h2h2v0.8h1v0.3h1v-1.1h1v1.1h1v-0.4h2v-0.7h3v0.2h2v0.7h1v-0.4h1v0.2h1v0.1h4v-0.4h2v0.1h1v0.3h4v-0.1h2v-0.3h4v-0.4h1v0.2h2v0.5h1v-0.7h1h4v1.1h2v-0.4h4v-0.3h2h2h1h1v-0.2h2v0.7h1v-0.2h4v0.4h4v-0.7h2v-0.2h1v0.3h2v-0.1h1v0.7h2h1v-0.4h1v0.4h4v-0.4h4v0.4h1v-0.3h2v0.1h2v-0.7h2h1v0.6h3v-0.1h1v-0.5h1v0.3h2v0.6h1v-0.4h2h3v-0.7h1v0.4h2v0.7h2h2v-0.2h2v-0.9h2v0.2h3v0.5h1h4v0.2h1v-0.9h3v0.9h3v-0.5h2v-0.2h2v0.6h1v0.1h1v-0.2h1v0.1h2v-0.4h1h1v0.1h2v0.2h1v-0.5h4h2v0.6h4v-0.6h1v0.2h2v-0.4h1v0.5h2v0.2h2v0.1h4v0.1h3v0.2h1v-0.9h1v-0.2h2v1.1h2v-0.4h1v-0.5h1v-0.2h4h3v0.7h1v0.1h2v-0.8h2v0.7h1h1v0.1h1v-0.1h4v-0.7h4v0.8h1v-0.1h1v0.2h1v-0.2h3v0.4h4h1v-0.9h3v0.5h4h1v0.1h2v0.1h3v0.2h2v-0.6h1v0.2h1v0.4h3h2v-0.2h2v-0.1h2h1v-0.1h1v0.4h2v-0.4h1v-0.7h1v0.2h4v0.9h1v-0.9h1v0.7h2v-0.2h2v-0.3h4v-0.2h4h2v0.5h1v0.1h2v0.1h1h2h2v-0.9h1v1.1h1v-0.4h2v-0.7h3v0.7h3v-0.7h1v0.7h2h3h2h1h3h2h4v-0.5h1v0.2h2v0.3h4h1v0.2h2v-0.1h1v-0.8h4v1.1h1v-0.9h4v0.2h2v0.3h2h1v0.4h1v-0.7h1v0.3h2v0.2h3v-0.5h2v-0.2h2v0.5h1v-0.7h4v0.4h1v-0.4h3v0.4h1v-0.4h2v0.2h1h1h1v-0.2h1v0.7h1v0.2h2v-0.2h4v-0.3h3v0.7h2v-0.6h2v0.6h1v-0.7h4v0.7h2v-0.6h1v0.2h4v0.2h1v-0.9h1h4v1.1h2v-1.1h2h1v0.7h1v0.4h4v-0.4h4v0.2h3v-0.5h2h2v0.3h3v0.2h3v-0.2h2v-0.5h1v0.5h1v0.1h2v-0.4h3v-0.2h1v0.5h1v-0.2h2v0.4h1v-0.7h1v-0.2h2v0.9h1v-0.7h1v0.3h2v0.4h4v-0.1h4v-0.1h4v0.4h2v-0.6h2v-0.1h2v0.7h2v-1.1h1v0.7h1v0.2h1v0.2h1v-0.2h3v-0.2h2v0.4h2v-0.3h1v0.1h3v-0.2h4v-0.7h4v0.7h1v-0.7h1h1v0.7h2v0.2h2v-0.2h1v-0.2h1v0.4h3v-0.5h1v0.3h3v-0.2h2v0.2h2v-0.2h1h4v0.4h2v-0.5h1v0.3h2v0.2h1v-0.2h2v0.2h3v-0.5h1h2v0.1h1v0.2h2h1v0.1h2V673.3h-2h-2v0.1h-2h-1v-0.1h-1v0.4h-2h-2h-4v-0.4h-2v-0.2h-2v0.7h-2v-0.5h-2v0.2h-2v0.3h-2v-0.5h-1h-2h-2v0.5h-1v-0.8h-3v0.3h-2h-1v0.1h-1v0.4h-1v-0.7h-1v-0.1h-3v0.4h-4v-0.1h-1v0.4h-2v-0.3h-1v-0.1h-1v0.5h-1v-0.3h-2v-0.2h-2v0.7h-1v-0.7h-2v0.5h-3v-0.7h-1v0.2h-4v0.2h-4v0.3h-3v-0.3h-3v-0.2h-2v0.2h-3v0.3h-1v-0.5h-3v-0.3h-2v0.3h-1v0.2h-1v-0.1h-1v-0.1h-4v-0.3h-4v0.8h-1v0.2h-3v-0.3h-3v0.1h-4v-0.7h-2v0.7h-1v-0.8h-2v0.4h-2v-0.1h-2h-1v0.7h-3v-0.5h-2v-0.4h-2v0.2h-2v0.5h-2v-0.5h-1v-0.3h-1h-2v1h-1v-0.6h-3v-0.1h-4h-1v-0.3h-1v0.4h-4v-0.1h-1v0.5h-3v-0.5h-4h-1h-3h-1v0.4h-2v-0.2h-1v-0.5h-1v0.7h-3v-0.7h-1v0.7h-3v-0.4h-2v0.1h-2v0.1h-2v0.2h-3v-0.3h-3v-0.4h-1v0.3h-2h-1h-2v0.4h-4v-0.7h-4v0.3h-2h-2h-3v-0.3h-4v0.4h-2v-0.3h-3v0.2h-4v0.1h-2v0.4h-4v-0.8h-4v0.8h-2v-0.7h-2v-0.1h-1v0.3h-2v0.2h-2v-0.4h-1v0.2h-4v0.1h-2v0.3h-2v-0.6h-4v-0.1h-4v0.3h-4h-4h-1v-0.2h-2v0.7h-4v-0.4h-2v-0.1h-2v0.7h-1v-0.9h-1v0.2h-4h-1v-0.2h-1v0.6h-2v-0.3h-1h-2v0.4h-1v-0.1h-3v-0.4h-3v-0.3h-1v1h-3v-0.7h-1v0.2h-1v-0.2h-4h-2h-1v0.4h-4h-2v-0.4h-1v0.1h-4v-0.3h-2h-4h-2v0.9h-3v-0.7h-1h-1v0.1h-1v0.4h-1v-0.3h-1v-0.2h-1h-1v0.1h-3v0.1h-4v0.3h-1v-0.4h-1h-3v0.4h-4v-0.5h-3v0.4h-3h-1v-0.4h-4v0.7h-4v-0.6h-4v0.4h-1v0.2h-2h-1v-0.5h-1v0.2h-1v-0.4h-1v-0.3h-1v0.7h-4v-0.4h-4v0.1h-2v0.4h-4v-0.4h-4v0.3h-2v-0.2h-4v-0.1h-1v-0.1h-1v0.2h-2h-4v-0.5h-1v0.8h-1v-0.7h-2v0.7h-1v-0.4h-4v0.6h-2v-0.7h-3v0.5h-1v-0.3h-4v0.2h-3v0.1h-1v-0.7h-3h-1v0.2h-1h-1h-1h-3h-2h-4h-1h-1h-4h-4v-0.2h-1v0.4h-2v-0.2h-3v0.5h-4v-0.3h-1h-1v-0.2h-1h-1v0.4h-4v-0.4h-2h-1v0.2h-4v-0.5h-2v0.8h-2v-0.5h-2v0.4h-2v-0.4h-2v-0.3h-4v0.1h-2v0.9h-3v-0.9h-2v0.2h-4h-2v0.1h-2v-0.4h-1v0.3h-2v-0.2h-3v0.2h-1v0.4h-3v0.1h-1v-0.4h-1v0.3h-1v-0.4h-1v0.7h-2h-1v-0.7h-4v-0.2h-2v0.3h-2v-0.3h-2v0.6h-1v-0.2h-1v-0.2h-2h-1v0.1h-2v-0.4h-1v0.3h-2v0.5h-2v-0.5h-4h-2v0.2h-2v0.2h-2v-0.3h-2v-0.1h-3v0.2h-2v-0.2h-2v-0.2h-3h-4v0.2h-4v-0.2h-2v0.3h-2v0.6h-1v-0.6h-4v-0.4h-4v1h-1v-0.3h-2v-0.2h-3v-0.5h-1v0.5h-2h-3v0.2h-2v-0.6h-4v0.2h-1v-0.3h-1v0.4h-3v-0.1h-2v-0.3h-1v0.7h-1v-0.4h-4h-1v0.5h-1v-0.5h-1v0.4h-2h-2v-0.4h-1h-4v0.2h-2v0.5h-2v-0.7h-1v0.5h-2v-0.3h-4v0.2h-3v-0.4h-2v0.4h-1v0.1h-3v-0.3h-1v-0.4h-2v0.7h-3v-0.7h-1v0.2h-1h-4v0.5h-2v-0.1h-2v-0.4h-4v0.2h-2v-0.2h-2v0.5h-2v0.2h-2v-0.9h-1v0.3h-2v-0.1h-4v-0.3h-4v0.8h-1v-0.5h-2v0.4h-1v-0.2h-3h-1v-0.5h-3v0.1h-1v0.3h-2v0.6h-1v-0.7h-3v-0.3h-4h-3v1h-2v-0.7h-1v0.1h-2v-0.3h-1v0.2h-2v0.4h-2v0.1h-2v-0.5h-1v0.5h-1v-0.8h-2v0.7h-3v-0.2h-1v0.3h-2v-0.3h-3v0.5h-2v-0.7h-1h-1v0.2h-4v-0.1h-2v0.1h-4v-0.5h-1v0.8h-4v-0.1h-2v-0.4h-3v-0.3h-2v0.7h-1v0.1h-4v-0.1h-4v-0.4h-2h-2v0.4h-4v-0.2h-2v0.2h-4v0.3h-2v-0.2h-2v-0.5h-3v-0.3h-4v0.7h-1v-0.4h-2v-0.2h-1v0.2h-2v-0.3h-3v0.1h-4v0.2h-1h-1v0.4h-4v-0.6h-2h-1v0.4h-1v0.5h-1v-0.7h-2v0.5h-1v-0.5h-3v-0.2h-3v0.3h-1v0.3h-4v0.3h-1v-0.5h-4v-0.2h-3v0.7h-4v-0.7h-4h-3v0.5h-2v-0.5h-1v0.7h-2v-0.7h-3v0.7h-2h-1h-1v-0.6h-1v-0.1h-3v-0.3h-1v0.1h-2v0.6h-2v-0.7h-2v0.8h-2v-0.5h-4v-0.3h-1v0.3h-4v-0.2h-1v-0.1h-1v0.4h-1v0.6h-2v-0.7h-1v0.5h-1v-0.5h-4h-2v-0.3h-4v1h-2v-0.6h-3v0.3h-1v-0.7h-2v0.7h-2v-0.4h-3v0.4h-2v0.3h-2v-1h-2v0.7h-3v-0.7h-3v1h-1v-1h-1h-1v0.7h-4v-0.6h-1v0.2h-4v0.5h-1v-0.4h-4h-2v-0.1h-3v0.4h-2v-0.4h-1v0.2h-1v-0.4h-2v0.2h-4v0.1h-3v0.4h-3v-0.5h-3v-0.2h-4v0.2h-4h-1v0.7h-4v-0.7h-4h-1v0.5h-1v-0.5h-1h-2v0.1h-2v0.3h-4v-0.4h-2h-2h-2v-0.2h-2h-4v0.9h-1v-0.6h-3v-0.1h-1v-0.2h-2v0.7h-4v-0.5h-2v0.5h-1v-0.7h-3v0.2h-4v0.5h-2v-0.5h-3v0.7h-1v-0.7h-1h-4h-2h-1v0.2h-1v-0.2h-1h-2v-0.2h-2v0.9h-1v-0.7h-4v-0.3h-1v0.3h-4h-4v0.1h-2v0.6h-4v-0.3h-2v-0.4h-1h-1v-0.2h-1v0.7h-1v-0.1h-2v-0.6h-4v0.9h-1v-0.7h-3v-0.3h-2v1h-3v-0.7h-2h-1h-2v0.5h-4h-2v-0.1h-2v-0.7h-3v0.7h-2v-0.6h-1h-4h-2v0.2h-4v-0.2h-1h-2v0.4h-2v0.3h-2h-4v-0.3h-3v0.2h-2v-0.4h-4v0.4h-2v0.1h-2v-0.7h-1v0.6h-1v-0.6h-1v0.6h-1v0.3h-3v-0.6h-2h-1v0.6h-3v-0.5h-2h-4v-0.4h-2v0.7h-1v-0.3h-2v-0.4h-2v0.7h-1v-0.4h-2h-1v-0.1h-2v0.5h-1v-0.4h-3h-2v0.6h-2v-0.9h-3v0.4h-1h-1v-0.2h-1v0.4h-4v-0.6h-2v-0.1h-3v0.4h-2v0.1h-1v0.5h-1v-0.7h-2v0.7h-2v-0.7h-1v-0.2h-2v-0.1h-1v0.4h-2v-0.1h-3h-1v-0.2h-1h-2v0.4h-3v0.2h-2v-0.4h-2v-0.2h-2v0.2h-3h-2v0.2h-2v0.3h-1v-0.5h-1h-1v-0.3h-3v1h-4v-0.7h-2v0.5h-3v-0.5h-1v-0.3h-2v0.5h-3v-0.2h-4v0.1h-1Z" fill="#fff21d"/>
<path d="M30.2 714.3h1M55.8 714.3h1M81.4 714.3h1M106.9 714.3h1M132.5 714.3h1M158.1 714.3h1M183.6 714.3h1M209.2 714.3h1M234.8 714.3h1M260.3 714.3h1M285.9 714.3h1M311.5 714.3h1M337.1 714.3h1M362.6 714.3h1M388.2 714.3h1M413.8 714.3h1M439.3 714.3h1M464.9 714.3h1M490.5 714.3h1M516.0 714.3h1M541.6 714.3h1M567.2 714.3h1M592.8 714.3h1M618.3 714.3h1M643.9 714.3h1M669.5 714.3h1M695.0 714.3h1M720.6 714.3h1M746.2 714.3h1M771.8 714.3h1M797.3 714.3h1M822.9 714.3h1M848.5 714.3h1M874.0 714.3h1M899.6 714.3h1M925.2 714.3h1M950.7 714.3h1M976.3 714.3h1M1001.9 714.3h1M1027.5 714.3h1M1053.0 714.3h1M1078.6 714.3h1M1104.2 714.3h1M1129.7 714.3h1M1155.3 714.3h1M1180.9 714.3h1M1206.4 714.3h1M1232.0 714.3h1M1257.6 714.3h1M30.2 699.2h1M55.8 699.2h1M81.4 699.2h1M106.9 699.2h1M132.5 699.2h1M158.1 699.2h1M183.6 699.2h1M209.2 699.2h1M234.8 699.2h1M260.3 699.2h1M285.9 699.2h1M311.5 699.2h1M337.1 699.2h1M362.6 699.2h1M388.2 699.2h1M413.8 699.2h1M439.3 699.2h1M464.9 699.2h1M490.5 699.2h1M516.0 699.2h1M541.6 699.2h1M567.2 699.2h1M592.8 699.2h1M618.3 699.2h1M643.9 699.2h1M669.5 699.2h1M695.0 699.2h1M720.6 699.2h1M746.2 699.2h1M771.8 699.2h1M797.3 699.2h1M822.9 699.2h1M848.5 699.2h1M874.0 699.2h1M899.6 699.2h1M925.2 699.2h1M950.7 699.2h1M976.3 699.2h1M1001.9 699.2h1M1027.5 699.2h1M1053.0 699.2h1M1078.6 699.2h1M1104.2 699.2h1M1129.7 699.2h1M1155.3 699.2h1M1180.9 699.2h1M1206.4 699.2h1M1232.0 699.2h1M1257.6 699.2h1M30.2 684.1h1M55.8 684.1h1M81.4 684.1h1M106.9 684.1h1M132.5 684.1h1M158.1 684.1h1M183.6 684.1h1M209.2 684.1h1M234.8 684.1h1M260.3 684.1h1M285.9 684.1h1M311.5 684.1h1M337.1 684.1h1M362.6 684.1h1M388.2 684.1h1M413.8 684.1h1M439.3 684.1h1M464.9 684.1h1M490.5 684.1h1M516.0 684.1h1M541.6 684.1h1M567.2 684.1h1M592.8 684.1h1M618.3 684.1h1M643.9 684.1h1M669.5 684.1h1M695.0 684.1h1M720.6 684.1h1M746.2 684.1h1M771.8 684.1h1M797.3 684.1h1M822.9 684.1h1M848.5 684.1h1M874.0 684.1h1M899.6 684.1h1M925.2 684.1h1M950.7 684.1h1M976.3 684.1h1M1001.9 684.1h1M1027.5 684.1h1M1053.0 684.1h1M1078.6 684.1h1M1104.2 684.1h1M1129.7 684.1h1M1155.3 684.1h1M1180.9 684.1h1M1206.4 684.1h1M1232.0 684.1h1M1257.6 684.1h1M30.2 669.0h1M55.8 669.0h1M81.4 669.0h1M106.9 669.0h1M132.5 669.0h1M158.1 669.0h1M183.6 669.0h1M209.2 669.0h1M234.8 669.0h1M260.3 669.0h1M285.9 669.0h1M311.5 669.0h1M337.1 669.0h1M362.6 669.0h1M388.2 669.0h1M413.8 669.0h1M439.3 669.0h1M464.9 669.0h1M490.5 669.0h1M516.0 669.0h1M541.6 669.0h1M567.2 669.0h1M592.8 669.0h1M618.3 669.0h1M643.9 669.0h1M669.5 669.0h1M695.0 669.0h1M720.6 669.0h1M746.2 669.0h1M771.8 669.0h1M797.3 669.0h1M822.9 669.0h1M848.5 669.0h1M874.0 669.0h1M899.6 669.0h1M925.2 669.0h1M950.7 669.0h1M976.3 669.0h1M1001.9 669.0h1M1027.5 669.0h1M1053.0 669.0h1M1078.6 669.0h1M1104.2 669.0h1M1129.7 669.0h1M1155.3 669.0h1M1180.9 669.0h1M1206.4 669.0h1M1232.0 669.0h1M1257.6 669.0h1M30.2 653.9h1M55.8 653.9h1M81.4 653.9h1M106.9 653.9h1M132.5 653.9h1M158.1 653.9h1M183.6 653.9h1M209.2 653.9h1M234.8 653.9h1M260.3 653.9h1M285.9 653.9h1M311.5 653.9h1M337.1 653.9h1M362.6 653.9h1M388.2 653.9h1M413.8 653.9h1M439.3 653.9h1M464.9 653.9h1M490.5 653.9h1M516.0 653.9h1M541.6 653.9h1M567.2 653.9h1M592.8 653.9h1M618.3 653.9h1M643.9 653.9h1M669.5 653.9h1M695.0 653.9h1M720.6 653.9h1M746.2 653.9h1M771.8 653.9h1M797.3 653.9h1M822.9 653.9h1M848.5 653.9h1M874.0 653.9h1M899.6 653.9h1M925.2 653.9h1M950.7 653.9h1M976.3 653.9h1M1001.9 653.9h1M1027.5 653.9h1M1053.0 653.9h1M1078.6 653.9h1M1104.2 653.9h1M1129.7 653.9h1M1155.3 653.9h1M1180.9 653.9h1M1206.4 653.9h1M1232.0 653.9h1M1257.6 653.9h1M30.2 638.8h1M55.8 638.8h1M81.4 638.8h1M106.9 638.8h1M132.5 638.8h1M158.1 638.8h1M183.6 638.8h1M209.2 638.8h1M234.8 638.8h1M260.3 638.8h1M285.9 638.8h1M311.5 638.8h1M337.1 638.8h1M362.6 638.8h1M388.2 638.8h1M413.8 638.8h1M439.3 638.8h1M464.9 638.8h1M490.5 638.8h1M516.0 638.8h1M541.6 638.8h1M567.2 638.8h1M592.8 638.8h1M618.3 638.8h1M643.9 638.8h1M669.5 638.8h1M695.0 638.8h1M720.6 638.8h1M746.2 638.8h1M771.8 638.8h1M797.3 638.8h1M822.9 638.8h1M848.5 638.8h1M874.0 638.8h1M899.6 638.8h1M925.2 638.8h1M950.7 638.8h1M976.3 638.8h1M1001.9 638.8h1M1027.5 638.8h1M1053.0 638.8h1M1078.6 638.8h1M1104.2 638.8h1M1129.7 638.8h1M1155.3 638.8h1M1180.9 638.8h1M1206.4 638.8h1M1232.0 638.8h1M1257.6 638.8h1M30.2 623.7h1M55.8 623.7h1M81.4 623.7h1M106.9 623.7h1M132.5 623.7h1M158.1 623.7h1M183.6 623.7h1M209.2 623.7h1M234.8 623.7h1M260.3 623.7h1M285.9 623.7h1M311.5 623.7h1M337.1 623.7h1M362.6 623.7h1M388.2 623.7h1M413.8 623.7h1M439.3 623.7h1M464.9 623.7h1M490.5 623.7h1M516.0 623.7h1M541.6 623.7h1M567.2 623.7h1M592.8 623.7h1M618.3 623.7h1M643.9 623.7h1M669.5 623.7h1M695.0 623.7h1M720.6 623.7h1M746.2 623.7h1M771.8 623.7h1M797.3 623.7h1M822.9 623.7h1M848.5 623.7h1M874.0 623.7h1M899.6 623.7h1M925.2 623.7h1M950.7 623.7h1M976.3 623.7h1M1001.9 623.7h1M1027.5 623.7h1M1053.0 623.7h1M1078.6 623.7h1M1104.2 623.7h1M1129.7 623.7h1M1155.3 623.7h1M1180.9 623.7h1M1206.4 623.7h1M1232.0 623.7h1M1257.6 623.7h1M30.2 608.6h1M55.8 608.6h1M81.4 608.6h1M106.9 608.6h1M132.5 608.6h1M158.1 608.6h1M183.6 608.6h1M209.2 608.6h1M234.8 608.6h1M260.3 608.6h1M285.9 608.6h1M311.5 608.6h1M337.1 608.6h1M362.6 608.6h1M388.2 608.6h1M413.8 608.6h1M439.3 608.6h1M464.9 608.6h1M490.5 608.6h1M516.0 608.6h1M541.6 608.6h1M567.2 608.6h1M592.8 608.6h1M618.3 608.6h1M643.9 608.6h1M669.5 608.6h1M695.0 608.6h1M720.6 608.6h1M746.2 608.6h1M771.8 608.6h1M797.3 608.6h1M822.9 608.6h1M848.5 608.6h1M874.0 608.6h1M899.6 608.6h1M925.2 608.6h1M950.7 608.6h1M976.3 608.6h1M1001.9 608.6h1M1027.5 608.6h1M1053.0 608.6h1M1078.6 608.6h1M1104.2 608.6h1M1129.7 608.6h1M1155.3 608.6h1M1180.9 608.6h1M1206.4 608.6h1M1232.0 608.6h1M1257.6 608.6h1M30.2 593.5h1M55.8 593.5h1M81.4 593.5h1M106.9 593.5h1M132.5 593.5h1M158.1 593.5h1M183.6 593.5h1M209.2 593.5h1M234.8 593.5h1M260.3 593.5h1M285.9 593.5h1M311.5 593.5h1M337.1 593.5h1M362.6 593.5h1M388.2 593.5h1M413.8 593.5h1M439.3 593.5h1M464.9 593.5h1M490.5 593.5h1M516.0 593.5h1M541.6 593.5h1M567.2 593.5h1M592.8 593.5h1M618.3 593.5h1M643.9 593.5h1M669.5 593.5h1M695.0 593.5h1M720.6 593.5h1M746.2 593.5h1M771.8 593.5h1M797.3 593.5h1M822.9 593.5h1M848.5 593.5h1M874.0 593.5h1M899.6 593.5h1M925.2 593.5h1M950.7 593.5h1M976.3 593.5h1M1001.9 593.5h1M1027.5 593.5h1M1053.0 593.5h1M1078.6 593.5h1M1104.2 593.5h1M1129.7 593.5h1M1155.3 593.5h1M1180.9 593.5h1M1206.4 593.5h1M1232.0 593.5h1M1257.6 593.5h1" stroke="#a3a3a3" stroke-opacity=".75" stroke-width="1" fill="none"/>
<path d="M30.7 578.0v1.4M56.3 578.0v1.4M81.9 578.0v1.4M107.4 578.0v1.4M158.6 578.0v1.4M184.1 578.0v1.4M209.7 578.0v1.4M235.3 578.0v1.4M286.4 578.0v1.4M312.0 578.0v1.4M337.6 578.0v1.4M363.1 578.0v1.4M414.3 578.0v1.4M439.8 578.0v1.4M465.4 578.0v1.4M491.0 578.0v1.4M542.1 578.0v1.4M567.7 578.0v1.4M593.3 578.0v1.4M618.8 578.0v1.4M670.0 578.0v1.4M695.5 578.0v1.4M721.1 578.0v1.4M746.7 578.0v1.4M797.8 578.0v1.4M823.4 578.0v1.4M849.0 578.0v1.4M874.5 578.0v1.4M925.7 578.0v1.4M951.2 578.0v1.4M976.8 578.0v1.4M1002.4 578.0v1.4M1053.5 578.0v1.4M1079.1 578.0v1.4M1104.7 578.0v1.4M1130.2 578.0v1.4M1181.4 578.0v1.4M1206.9 578.0v1.4M1232.5 578.0v1.4M1258.1 578.0v1.4" stroke="#777" stroke-width="1" fill="none"/>
<path d="M133.0 578.0V716M260.9 578.0V716M388.7 578.0V716M516.5 578.0V716M772.2 578.0V716M900.1 578.0V716M1027.9 578.0V716M1155.8 578.0V716" stroke="#b0b0b0" stroke-opacity=".7" stroke-width="1" stroke-dasharray="1 2.02" fill="none"/>
<path d="M644.4 605V716" stroke="#bdbdb0" stroke-opacity=".85" stroke-width="1" stroke-dasharray="5 3.2" fill="none"/>
<path d="M5.7 578.0V729.75" stroke="#c9791d" stroke-width="1" stroke-dasharray="3 2" fill="none"/>
<g font-size="8.67" text-anchor="end">
<text x="1279.4" y="717.5" fill="#efe51f">240 mV</text>
<text x="1279.4" y="702.4" fill="#efe51f">480 mV</text>
<text x="1279.4" y="687.3" fill="#efe51f">720 mV</text>
<text x="1280.1" y="672.9" fill="#fffbd0" fill-opacity=".8">960 mV</text>
<text x="1279.4" y="672.2" fill="#625a08">960 mV</text>
<text x="1280.1" y="657.8" fill="#fffbd0" fill-opacity=".8">1.20 V</text>
<text x="1279.4" y="657.1" fill="#625a08">1.20 V</text>
<text x="1280.1" y="642.7" fill="#fffbd0" fill-opacity=".8">1.44 V</text>
<text x="1279.4" y="642.0" fill="#625a08">1.44 V</text>
<text x="1280.1" y="627.6" fill="#fffbd0" fill-opacity=".8">1.68 V</text>
<text x="1279.4" y="626.9" fill="#625a08">1.68 V</text>
<text x="1280.1" y="612.5" fill="#fffbd0" fill-opacity=".8">1.92 V</text>
<text x="1279.4" y="611.8" fill="#625a08">1.92 V</text>
<text x="1280.1" y="597.4" fill="#fffbd0" fill-opacity=".8">2.16 V</text>
<text x="1279.4" y="596.7" fill="#625a08">2.16 V</text>
</g>
<g font-size="8.67" text-anchor="middle" fill="#b6b6b6">
<text x="133.0" y="725">-80 µs</text>
<text x="260.9" y="725">-60 µs</text>
<text x="388.7" y="725">-40 µs</text>
<text x="516.5" y="725">-20 µs</text>
<text x="644.4" y="725">0 s</text>
<text x="772.2" y="725">20 µs</text>
<text x="900.1" y="725">40 µs</text>
<text x="1027.9" y="725">60 µs</text>
<text x="1155.8" y="725">80 µs</text>
</g>
<path d="M8 731V724.2Q8 720.6 11.6 720.6H24.2L33.6 731Z" fill="#f6ea2b"/>
<text x="14" y="733.5" font-size="9" fill="#4a4400">C1</text>
<path d="M1267.8 731L1283.4 722.4V731Z" fill="#f6ea2b"/>
</g>
<path d="M638.7 560H649.7L644.2 563.8Z" fill="#f08a1e"/>
<path d="M640.4 565H648.2Q649.4 565 649.4 566.2V573.9Q649.4 575.1 648.2 575.1H646.2L644.3 577.3L642.4 575.1H640.4Q639.2 575.1 639.2 573.9V566.2Q639.2 565 640.4 565Z" fill="#2c2a28" stroke="#f08a1e" stroke-width="1.1"/>
<text x="644.3" y="573.3" font-size="8" font-weight="bold" text-anchor="middle" fill="#f08a1e">T</text>
<path d="M636.9 578H651.9L644.4 585.6Z" fill="#f08a1e"/>
<path d="M637.9 585.3H650.9V599.6H647.2L644.4 604.8L641.6 599.6H637.9Z" fill="#000" stroke="#f08a1e" stroke-width="1.6" stroke-linejoin="miter"/>
<text x="644.4" y="596.8" font-size="11" font-weight="bold" text-anchor="middle" fill="#fff">T</text>
<use href="#zoomico" x="1253.4" y="582.7"/>
</svg>
<div class="abs" style="left:1289.8px;top:370.7px;width:2px;height:2px;background:#e8e8e8;border-radius:1px;box-shadow:0 5.8px 0 #e8e8e8,0 11.6px 0 #e8e8e8"></div>
<aside class="sidebar">
<h2><span class="fx" style="transform:scaleX(0.970);transform-origin:50% 50%">Add New...</span></h2>
<div class="sbtn" style="left:4.3px;top:19.1px"><span><span class="fx" style="transform:scaleX(0.976);transform-origin:50% 50%">Cursors</span></span></div>
<div class="sbtn" style="left:56.4px;top:19.1px"><span><span class="fx" style="transform:scaleX(1.070);transform-origin:50% 50%">Note</span></span></div>
<div class="sbtn" style="left:4.3px;top:52.3px"><span><span class="fx" style="transform:scaleX(1.033);transform-origin:50% 50%">Measure</span></span></div>
<div class="sbtn" style="left:56.4px;top:52.3px"><span><span class="fx" style="transform:scaleX(0.976);transform-origin:50% 50%">Search</span></span></div>
<div class="sbtn" style="left:4.3px;top:85.1px"><span><span class="fx" style="transform:scaleX(0.958);transform-origin:50% 50%">Results</span><br><span class="fx" style="transform:scaleX(0.933);transform-origin:50% 50%">Table</span></span></div>
<div class="sbtn" style="left:56.4px;top:85.1px"><span><span class="fx" style="transform:scaleX(1.112);transform-origin:50% 50%">Plot</span></span></div>
<div class="sep" style="left:2px;top:116.3px;width:105.5px"></div>
<article class="badge" style="top:125.8px"><header><span class="fx" style="transform:scaleX(0.965);transform-origin:0 50%">Meas 1</span><i>1</i></header>
<p style="top:17.0px"><span class="fx" style="transform:scaleX(1.056);transform-origin:0 50%">Frequency _ risin...</span></p>
<p style="top:30.9px"><span class="fx" style="transform:scaleX(1.072);transform-origin:0 50%">µ': 40.00 MHz</span></p>
<p style="top:44.8px"><span class="fx" style="transform:scaleX(1.053);transform-origin:0 50%">σ': 64.81 kHz</span></p>
<p style="top:58.7px"><span class="fx" style="transform:scaleX(1.072);transform-origin:0 50%">M: 40.39 MHz</span></p>
<p style="top:72.6px"><span class="fx" style="transform:scaleX(1.061);transform-origin:0 50%">m: 39.68 MHz</span></p>
<p style="top:86.5px"><span class="fx" style="transform:scaleX(1.025);transform-origin:0 50%">N: 5039335</span></p>
</article>
<article class="badge" style="top:229.1px"><header><span class="fx" style="transform:scaleX(0.965);transform-origin:0 50%">Meas 2</span><i>1</i></header>
<p style="top:17.0px"><span class="fx" style="transform:scaleX(1.030);transform-origin:0 50%">TIE _ rising edge</span></p>
<p style="top:30.9px"><span class="fx" style="transform:scaleX(1.097);transform-origin:0 50%">µ': 4.861 as</span></p>
<p style="top:44.8px"><span class="fx" style="transform:scaleX(1.052);transform-origin:0 50%">σ': 37.13 ps</span></p>
<p style="top:58.7px"><span class="fx" style="transform:scaleX(1.047);transform-origin:0 50%">M: 175.9 ps</span></p>
<p style="top:72.6px"><span class="fx" style="transform:scaleX(1.035);transform-origin:0 50%">m: -217.6 ps</span></p>
<p style="top:86.5px"><span class="fx" style="transform:scaleX(1.025);transform-origin:0 50%">N: 5039965</span></p>
</article>
<article class="badge" style="top:332.4px"><header><span class="fx" style="transform:scaleX(0.965);transform-origin:0 50%">Meas 3</span><i>1</i></header>
<p style="top:17.0px"><span class="fx" style="transform:scaleX(1.080);transform-origin:0 50%">Frequency _ falli...</span></p>
<p style="top:30.9px"><span class="fx" style="transform:scaleX(1.072);transform-origin:0 50%">µ': 40.00 MHz</span></p>
<p style="top:44.8px"><span class="fx" style="transform:scaleX(1.053);transform-origin:0 50%">σ': 80.29 kHz</span></p>
<p style="top:58.7px"><span class="fx" style="transform:scaleX(1.072);transform-origin:0 50%">M: 40.40 MHz</span></p>
<p style="top:72.6px"><span class="fx" style="transform:scaleX(1.061);transform-origin:0 50%">m: 39.67 MHz</span></p>
<p style="top:86.5px"><span class="fx" style="transform:scaleX(1.025);transform-origin:0 50%">N: 5039327</span></p>
</article>
<article class="badge sel" style="top:435.7px"><header><span class="fx" style="transform:scaleX(0.965);transform-origin:0 50%">Meas 4</span><i>1</i></header>
<p style="top:17.0px"><span class="fx" style="transform:scaleX(1.062);transform-origin:0 50%">TIE _ falling edge</span></p>
<p style="top:30.9px"><span class="fx" style="transform:scaleX(1.031);transform-origin:0 50%">µ': -6.502 as</span></p>
<p style="top:44.8px"><span class="fx" style="transform:scaleX(1.034);transform-origin:0 50%">σ': 40.06 ps</span></p>
<p style="top:58.7px"><span class="fx" style="transform:scaleX(1.029);transform-origin:0 50%">M: 171.8 ps</span></p>
<p style="top:72.6px"><span class="fx" style="transform:scaleX(1.022);transform-origin:0 50%">m: -214.2 ps</span></p>
<p style="top:86.5px"><span class="fx" style="transform:scaleX(1.025);transform-origin:0 50%">N: 5039957</span></p>
</article>
<div class="sep" style="left:2px;top:670.4px;width:105.5px"></div>
<div class="sbtn" style="left:4.3px;top:677.2px;height:27.3px"><svg width="44" height="25" viewBox="0 0 44 25"><g fill="none"><path d="M13.4 4.1H23.6" stroke="#dcdcdc" stroke-width="1.4" stroke-dasharray="1.4 1.9"/><path d="M13.4 4.1V14.3" stroke="#dcdcdc" stroke-width="1.4" stroke-dasharray="1.4 1.9"/><path d="M13.4 14.3H18" stroke="#dcdcdc" stroke-width="1.4" stroke-dasharray="1.4 1.9"/><path d="M23.6 4.1V8.5" stroke="#dcdcdc" stroke-width="1.4" stroke-dasharray="1.4 1.9"/><circle cx="23.3" cy="14.1" r="3.5" fill="#8d8d8d" stroke="#d6d6d6" stroke-width="1.4"/><path d="M26.2 17L30.2 20.8" stroke="#d6d6d6" stroke-width="2.2" stroke-linecap="round"/></g></svg></div>
<svg class="abs" style="left:71.1px;top:677.8px" width="22" height="26" viewBox="0 0 22 26"><g fill="none" stroke="#cdcdcd" stroke-width="1.2"><ellipse cx="11" cy="4.6" rx="9.6" ry="3.4"/><ellipse cx="11" cy="4.4" rx="7" ry="2" stroke-width="1"/><path d="M1.6 5.6L3.6 22.4Q4 25 11 25Q18 25 18.4 22.4L20.4 5.6"/><path d="M6.6 9V22.6M11 9.4V23.2M15.4 9V22.6" stroke-width="1.1"/></g></svg>
</aside>
<footer class="bottom">
<section class="info ch" style="left:2px;width:66.4px"><header><span class="fx" style="transform:scaleX(0.929);transform-origin:0 50%">Ch 1</span></header><p style="left:5.4px;top:16.75px"><span class="fx" style="transform:scaleX(1.061);transform-origin:0 50%">240 mV/div</span></p><p style="left:5.4px;top:31.0px"><span class="fx" style="transform:scaleX(1.019);transform-origin:0 50%">50 Ω</span></p><p style="left:5.4px;top:44.3px"><span class="fx" style="transform:scaleX(1.047);transform-origin:0 50%">500 MHz</span><span style="position:absolute;left:48.5px;top:-1.5px;font-size:6.5px;font-weight:bold;line-height:8px">B</span><span style="position:absolute;left:52.5px;top:1.5px;font-size:6.5px;font-weight:bold;line-height:8px">w</span></p></section>
<div class="chb" style="left:485.1px;--c:#22c9cb"><b>2</b></div>
<div class="chb" style="left:518.0px;--c:#e33058"><b>3</b></div>
<div class="chb" style="left:550.9px;--c:#80c81f"><b>4</b></div>
<div class="chb" style="left:583.7px;--c:#f08a1e"><b>5</b></div>
<div class="chb" style="left:616.6px;--c:#2a2acf"><b>6</b></div>
<div class="chb" style="left:649.5px;--c:#e63fb0"><b>7</b></div>
<div class="chb" style="left:682.4px;--c:#16c98e"><b>8</b></div>
<div class="vsep" style="left:719.2px"></div>
<div class="chb" style="left:727.2px;--c:#f08a1e"><em><span class="fx" style="transform:scaleX(1.106);transform-origin:50% 50%">Add</span><br><span class="fx" style="transform:scaleX(1.041);transform-origin:50% 50%">New</span><br><span class="fx" style="transform:scaleX(1.079);transform-origin:50% 50%">Math</span></em></div>
<div class="chb" style="left:760.1px;--c:#d4d4dc"><em><span class="fx" style="transform:scaleX(1.106);transform-origin:50% 50%">Add</span><br><span class="fx" style="transform:scaleX(1.041);transform-origin:50% 50%">New</span><br><span class="fx" style="transform:scaleX(1.000);transform-origin:50% 50%">Ref</span></em></div>
<div class="chb" style="left:793.0px;--c:#b24fe6"><em><span class="fx" style="transform:scaleX(1.106);transform-origin:50% 50%">Add</span><br><span class="fx" style="transform:scaleX(1.041);transform-origin:50% 50%">New</span><br><span class="fx" style="transform:scaleX(0.940);transform-origin:50% 50%">Bus</span></em></div>
<div class="vsep" style="left:829.4px"></div>
<div class="chb" style="left:837.3px;--c:#4c4c4c"><em class="one"><span class="fx" style="transform:scaleX(1.042);transform-origin:50% 50%">DVM</span></em></div>
<div class="chb" style="left:874.2px;--c:#4c4c4c"><em class="one"><span class="fx" style="transform:scaleX(0.928);transform-origin:50% 50%">AFG</span></em></div>
<div class="vsep" style="left:910.4px"></div>
<section class="info" style="left:918.3px;width:165px"><header><span class="fx" style="transform:scaleX(1.090);transform-origin:0 50%">Horizontal</span></header><p style="left:5px;top:16.75px"><span class="fx" style="transform:scaleX(1.044);transform-origin:0 50%">20 µs/div</span></p><p style="left:83.2px;top:16.75px"><span class="fx" style="transform:scaleX(0.996);transform-origin:0 50%">200 µs</span></p><p style="left:5px;top:30.5px"><span class="fx" style="transform:scaleX(0.947);transform-origin:0 50%">SR: 3.125 GS/s</span></p><p style="left:83.2px;top:30.5px"><span class="fx" style="transform:scaleX(1.046);transform-origin:0 50%">320 ps/pt</span></p><p style="left:5px;top:43.9px"><span class="fx" style="transform:scaleX(1.021);transform-origin:0 50%">RL: 625 kpts</span></p><p style="left:97.6px;top:43.9px"><span class="fx" style="transform:scaleX(1.002);transform-origin:0 50%">50%</span></p><svg class="abs" style="left:82.8px;top:45.6px" width="8" height="10" viewBox="0 0 8 10"><path d="M0.4 0.4H7V6.6H5L3.7 9.4L2.4 6.6H0.4Z" fill="#1a1206" stroke="#f08a1e" stroke-width="1"/><path d="M2.2 2.2H5.2M3.7 2.2V5.4" stroke="#fff" stroke-width="1" fill="none"/></svg></section>
<section class="info" style="left:1090.1px;width:117.5px"><header><span class="fx" style="transform:scaleX(1.043);transform-origin:0 50%">Trigger</span></header><span class="abs" style="left:5.4px;top:17.4px;width:21.8px;height:12.2px;border:1px solid #2b2b20;border-radius:4.5px;background:#fff341;font-size:11px;line-height:10.5px;text-align:center;color:#111">1</span><svg class="abs" style="left:34px;top:19px" width="14" height="10" viewBox="0 0 14 10"><path d="M0.8 8.6H3.4L9.4 1.4H12.4" fill="none" stroke="#54509a" stroke-width="1.1"/></svg><p style="left:53.8px;top:16.75px"><span class="fx" style="transform:scaleX(1.021);transform-origin:0 50%">0 V</span></p></section>
<section class="info" style="left:1214.5px;width:109.6px"><header><span class="fx" style="transform:scaleX(1.076);transform-origin:0 50%">Acquisition</span></header><p style="left:5.6px;top:16.75px"><span class="fx" style="transform:scaleX(1.111);transform-origin:0 50%">Auto,</span></p><p style="left:48.8px;top:16.75px"><span class="fx" style="transform:scaleX(1.067);transform-origin:0 50%">Analyze</span></p><p style="left:5.6px;top:30.5px"><span class="fx" style="transform:scaleX(1.041);transform-origin:0 50%">High Res: 12 bits</span></p><p style="left:5.6px;top:43.9px"><span class="fx" style="transform:scaleX(1.048);transform-origin:0 50%">630 Acqs</span></p></section>
<div class="autobtn"><span class="fx" style="transform:scaleX(0.903);transform-origin:50% 50%">Auto</span></div>
</footer>
</div></body></html>
